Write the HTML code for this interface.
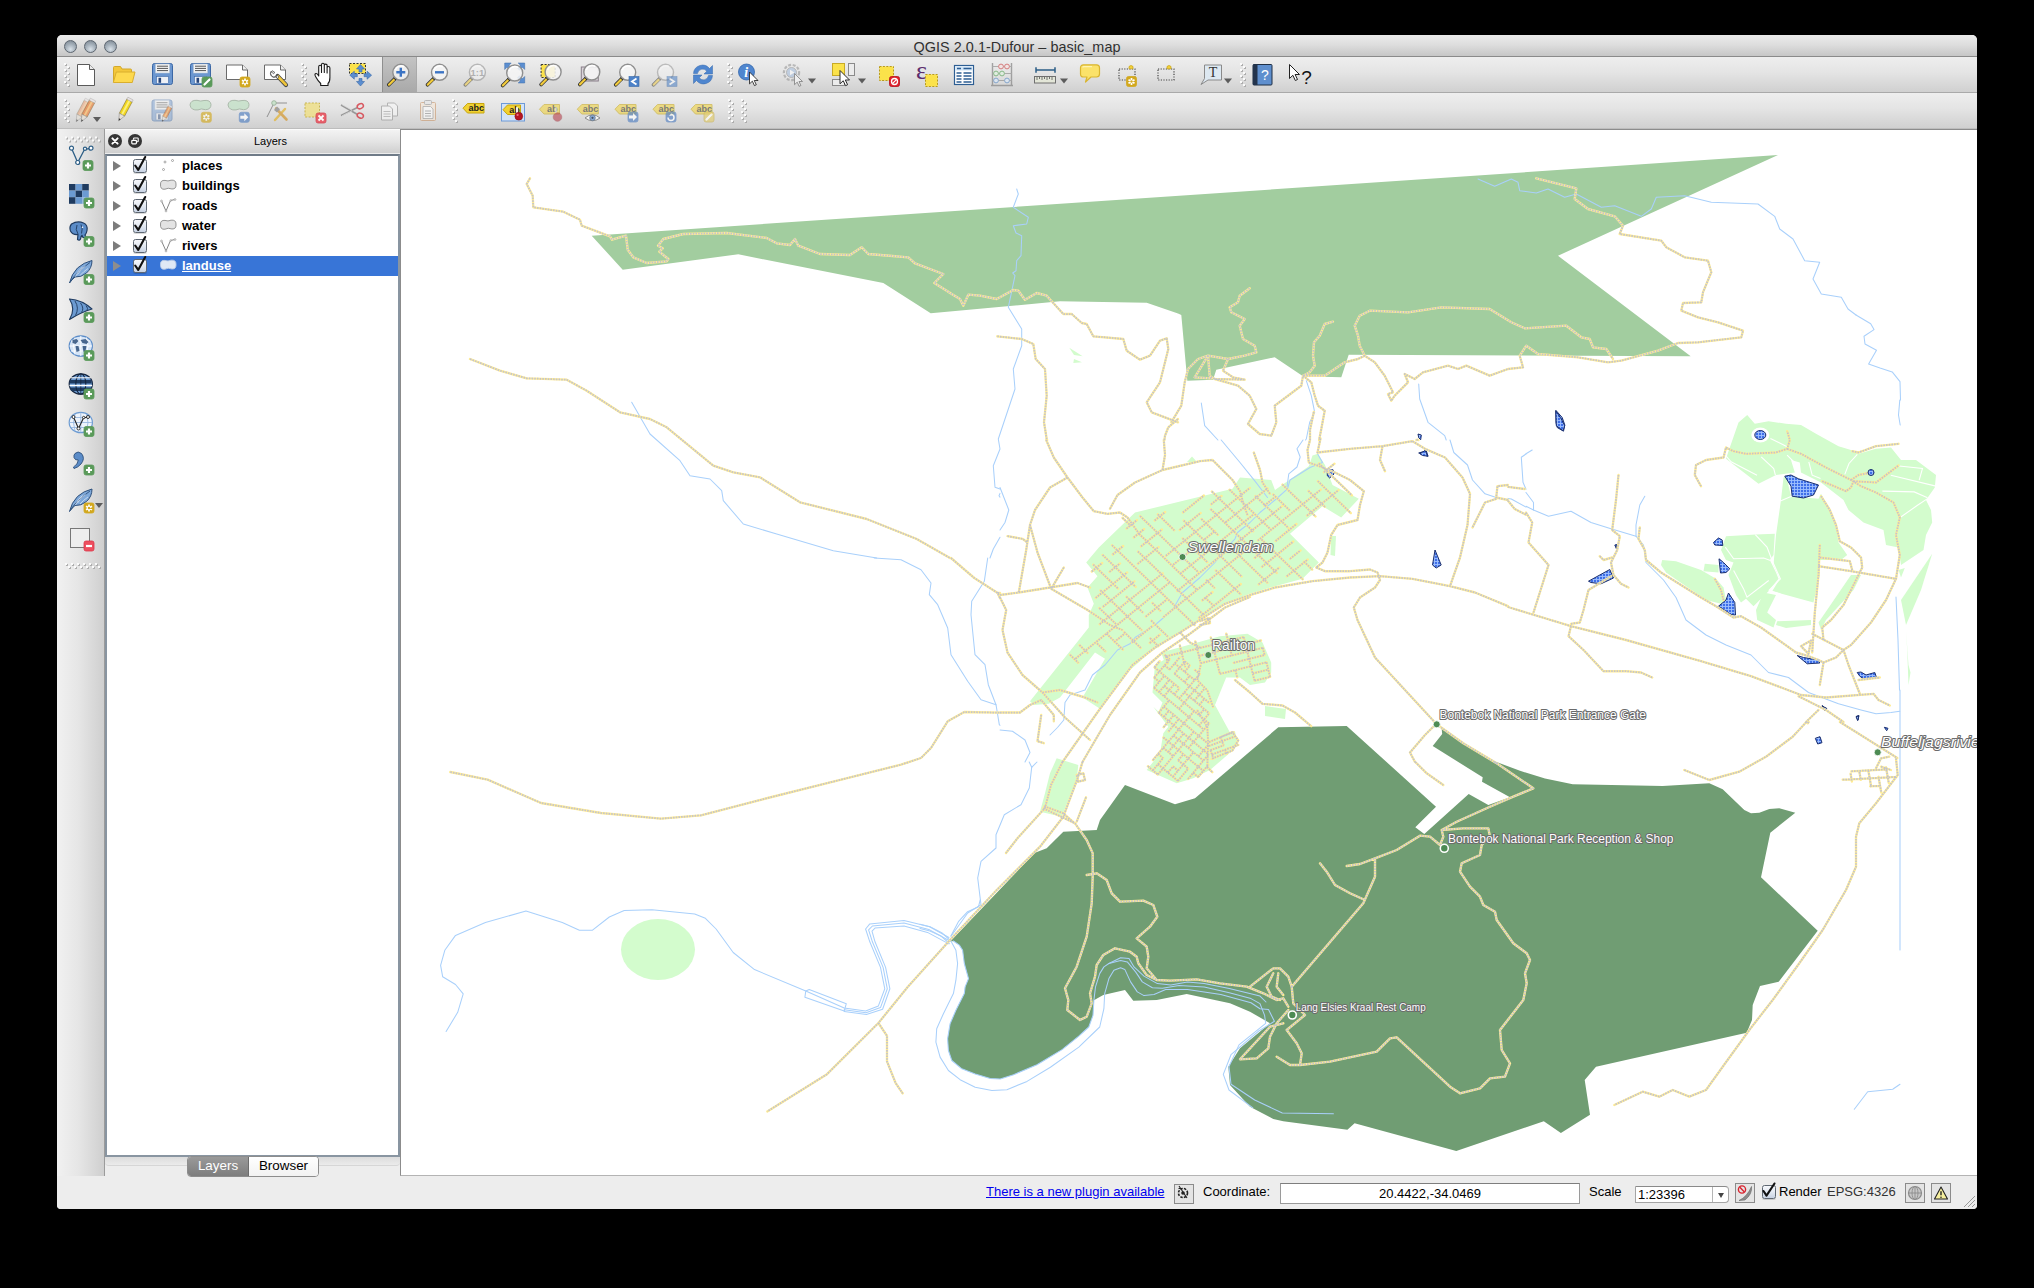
<!DOCTYPE html>
<html><head><meta charset="utf-8"><title>QGIS 2.0.1-Dufour - basic_map</title>
<style>
html,body{margin:0;padding:0;background:#000;}
body{width:2034px;height:1288px;position:relative;overflow:hidden;font-family:"Liberation Sans",sans-serif;color:#000;}
.abs{position:absolute;}
#win{position:absolute;left:57px;top:35px;width:1920px;height:1174px;background:#ededed;border-radius:5px 5px 4px 4px;overflow:hidden;}
#title{position:absolute;left:0;top:0;width:1920px;height:21px;background:linear-gradient(#ebebeb,#dedede 45%,#c6c6c6);border-bottom:1px solid #8a8a8a;}
#title .t{position:absolute;left:0;width:1920px;top:3.5px;text-align:center;font-size:14.4px;color:#303030;letter-spacing:0.05px;}
.tl{position:absolute;top:5px;width:11px;height:11px;border-radius:50%;background:radial-gradient(circle at 50% 75%,#d9e1e8 0%,#a9b4be 45%,#78838e 100%);border:1px solid #5d6670;}
.tb{position:absolute;left:0;width:1920px;height:35px;background:linear-gradient(#eeeeee,#e4e4e4 45%,#d0d0d0);border-bottom:1px solid #a9a9a9;}
#tb1{top:22px;}
#tb2{top:58px;border-bottom:1px solid #bdbdbd;}
#ltb{position:absolute;left:0;top:94px;width:47px;height:1047px;background:linear-gradient(90deg,#f1f1f1,#e6e6e6 45%,#cfcfcf);border-right:1px solid #9b9b9b;}
#lhead{position:absolute;left:48px;top:94px;width:295px;height:23px;border-top:1px solid #fbfbfb;background:linear-gradient(#f3f3f3,#e4e4e4 50%,#cfcfcf);}
#lhead .t{position:absolute;left:18px;width:295px;top:5px;text-align:center;font-size:11px;color:#000;}
#list{position:absolute;left:48px;top:119px;width:291px;height:999px;background:#fff;border:2px solid #8995a1;border-top-color:#6f7b88;}
.row{position:absolute;left:0;width:291px;height:20px;font-size:13px;font-weight:bold;}
.row .lbl{position:absolute;left:75px;top:2px;white-space:nowrap;}
.row .arr{position:absolute;left:6px;top:5px;width:0;height:0;border-left:8px solid #7c7c7c;border-top:5px solid transparent;border-bottom:5px solid transparent;}
.cb{position:absolute;left:25.5px;top:3px;width:12px;height:12px;border:1px solid #5f6873;border-radius:2.5px;background:linear-gradient(#f6f8fb,#e3e9f2 50%,#c7d2e3);box-shadow:0 1px 0 rgba(0,0,0,.15);}
.sel{background:#3875d7;color:#fff;}
#tabs{position:absolute;left:130px;top:1121px;height:19px;width:130px;border:1px solid #8d8d8d;border-radius:4px;overflow:hidden;background:#fff;font-size:13.4px;}
#tabs .a{position:absolute;left:0;top:0;width:60px;height:19px;background:linear-gradient(#9a9a9a,#7d7d7d);color:#fff;text-align:center;line-height:18px;border-right:1px solid #6d6d6d;}
#tabs .b{position:absolute;left:61px;top:0;width:69px;height:19px;background:linear-gradient(#ffffff,#f2f2f2);color:#000;text-align:center;line-height:18px;}
#tabline{position:absolute;left:48px;top:1122px;width:295px;height:8px;border-bottom:1px solid #d6d6d6;border-radius:0 0 4px 4px;background:linear-gradient(#dcdcdc,#ebebeb);}
#canvas{position:absolute;left:343px;top:94px;width:1577px;height:1047px;background:#fff;border-left:1px solid #8c8c8c;border-top:1px solid #8c8c8c;border-bottom:1px solid #b4b4b4;box-sizing:border-box;}
#status{position:absolute;left:0;top:1142px;width:1920px;height:32px;background:#ededed;font-size:13px;}
#status .s{position:absolute;top:7px;white-space:nowrap;}
.ibox{position:absolute;width:18px;height:18px;border:1px solid #8b8b8b;background:#e4e4e4;box-sizing:border-box;}
#mapsvg{position:absolute;left:0;top:0;}
.ico{position:absolute;}
</style></head><body>
<div id="win">
 <div id="title">
  <div class="tl" style="left:7px"></div><div class="tl" style="left:27px"></div><div class="tl" style="left:47px"></div>
  <div class="t">QGIS 2.0.1-Dufour – basic_map</div>
 </div>
 <div class="tb" id="tb1"></div>
 <div class="tb" id="tb2"></div>
 <div id="ltb"></div>
 <div id="lhead"><div class="t">Layers</div></div>
 <div id="list">
  <div class="row" style="top:0px"><div class="arr"></div><div class="cb"></div><div class="lbl">places</div></div>
  <div class="row" style="top:20px"><div class="arr"></div><div class="cb"></div><div class="lbl">buildings</div></div>
  <div class="row" style="top:40px"><div class="arr"></div><div class="cb"></div><div class="lbl">roads</div></div>
  <div class="row" style="top:60px"><div class="arr"></div><div class="cb"></div><div class="lbl">water</div></div>
  <div class="row" style="top:80px"><div class="arr"></div><div class="cb"></div><div class="lbl">rivers</div></div>
  <div class="row sel" style="top:100px"><div class="arr" style="border-left-color:#8d8d8d"></div><div class="cb"></div><div class="lbl" style="text-decoration:underline">landuse</div></div>
 </div>
 <div id="tabline"></div>
 <div id="tabs"><div class="a">Layers</div><div class="b">Browser</div></div>
 <div id="canvas"></div>
 <div id="status">
  <div class="s" style="left:929px;color:#0000ee;text-decoration:underline">There is a new plugin available</div>
  <div class="ibox" style="left:1117px;top:7px;width:20px;height:20px"></div>
  <div class="s" style="left:1146px">Coordinate:</div>
  <div class="abs" style="left:1223px;top:6px;width:298px;height:19px;border:1px solid #9a9a9a;border-top-color:#7e7e7e;background:#fff;text-align:center;line-height:19px;font-size:13px">20.4422,-34.0469</div>
  <div class="s" style="left:1532px">Scale</div>
  <div class="abs" style="left:1578px;top:9px;width:92px;height:15px;border:1px solid #a5a5a5;border-top-color:#8a8a8a;border-radius:0 4px 4px 0;background:#fff;font-size:13px;line-height:16px"><span style="position:absolute;left:2px;top:0">1:23396</span><span style="position:absolute;left:76px;top:0;width:1px;height:15px;background:#b5b5b5"></span><span style="position:absolute;left:82px;top:6px;width:0;height:0;border-top:5px solid #444;border-left:3px solid transparent;border-right:3px solid transparent"></span></div>
  <div class="ibox" style="left:1678px;top:6px;width:20px;height:20px"></div>
  <div class="cb" style="left:1705px;top:8px"></div>
  <div class="s" style="left:1722px">Render</div>
  <div class="s" style="left:1770px;color:#333">EPSG:4326</div>
  <div class="ibox" style="left:1848px;top:6px;width:20px;height:20px"></div>
  <div class="ibox" style="left:1874px;top:6px;width:20px;height:20px"></div>
 </div>
</div>
<svg id="mapsvg" width="2034" height="1288" viewBox="0 0 2034 1288">
<defs><clipPath id="mc"><rect x="401" y="130" width="1576" height="1046"/></clipPath><pattern id="wp" width="3" height="3" patternUnits="userSpaceOnUse"><rect width="3" height="3" fill="#3f6fe8"/><rect width="3" height="0.9" fill="#9fc0ff"/><rect width="0.9" height="3" fill="#9fc0ff"/></pattern></defs>
<g clip-path="url(#mc)">
<polygon fill="#a2cd9f" points="591.7,235.7 622.7,269.7 738.3,254.3 883.3,283.0 930.7,313.3 1060.0,301.3 1146.7,302.7 1178.0,313.5 1181.3,315.0 1187.3,380.7 1213.0,379.7 1216.3,369.7 1274.7,357.3 1303.0,376.3 1341.3,377.3 1348.7,354.7 1690.7,356.3 1558.0,255.7 1778.0,155.0"/>
<polygon fill="#709d73" points="1278.3,727.3 1346.7,726.0 1436.0,806.7 1415.3,827.3 1424.3,834.0 1468.7,794.0 1488.3,805.0 1510.0,797.3 1482.0,781.7 1482.7,777.3 1432.7,746.0 1442.2,733.9 1441.5,727.0 1459.0,741.0 1488.5,759.0 1520.0,770.8 1545.0,778.5 1572.7,784.3 1662.7,786.0 1709.3,783.3 1722.7,789.3 1744.3,810.0 1751.0,813.3 1759.3,812.7 1769.3,809.0 1779.3,808.3 1795.3,812.7 1770.3,832.7 1761.0,877.3 1817.7,930.7 1778.7,981.7 1760.0,986.0 1752.7,1005.0 1752.0,1020.0 1746.7,1032.7 1596.0,1066.7 1584.7,1080.0 1590.0,1114.8 1560.9,1133.1 1543.8,1121.2 1456.3,1151.1 1354.6,1123.3 1347.4,1129.7 1283.3,1121.2 1273.3,1119.0 1250.0,1106.7 1230.0,1085.0 1228.3,1066.7 1240.0,1048.3 1270.0,1023.3 1250.0,1011.7 1230.0,1003.3 1186.7,994.0 1156.7,1000.0 1133.3,1000.7 1125.0,990.0 1103.3,995.0 1093.9,1000.3 1093.0,1015.3 1088.8,1027.0 1078.8,1036.2 1062.1,1049.6 1037.0,1064.7 1013.6,1074.7 1000.2,1078.9 990.2,1078.5 975.2,1073.9 961.8,1068.8 951.8,1060.5 948.4,1050.5 947.6,1038.7 950.1,1023.7 955.9,1010.3 964.3,993.6 965.1,986.9 968.5,978.6 964.3,963.5 962.6,950.2 959.3,945.1 953.4,941.0 950.0,941.7 1035.0,852.7 1046.7,848.3 1063.3,831.7 1096.7,830.0 1100.0,820.0 1125.0,785.0 1175.0,804.3 1195.0,798.3"/>
<polygon fill="#d3fccd" points="1135.0,512.5 1232.5,488.8 1240.0,477.5 1271.2,480.0 1275.0,490.0 1308.8,466.2 1312.5,455.5 1318.0,453.8 1325.0,465.0 1332.5,485.0 1358.8,498.8 1341.2,517.5 1322.5,506.2 1290.0,533.8 1318.8,562.5 1302.5,578.8 1275.0,586.2 1250.0,593.8 1225.0,603.8 1207.5,615.0 1180.0,632.5 1150.0,652.5 1130.0,670.0 1100.0,708.8 1082.5,697.5 1105.0,658.8 1095.0,652.5 1060.0,697.5 1048.8,703.8 1033.8,705.0 1030.0,701.2 1088.8,627.5 1088.8,615.0 1093.8,603.8 1087.5,587.5 1097.5,576.2 1086.2,562.5 1098.8,547.5"/>
<polygon fill="#d3fccd" points="1187.0,462.0 1192.0,456.5 1197.5,462.5"/>
<polygon fill="#d3fccd" points="1161.2,652.5 1220.0,636.2 1247.5,633.8 1262.5,642.5 1271.2,662.5 1271.2,672.5 1265.0,682.5 1250.0,685.0 1240.0,677.5 1226.2,677.5 1215.0,705.0 1230.0,732.5 1235.0,731.2 1237.5,743.8 1233.2,750.0 1210.0,770.0 1193.3,778.3 1176.7,783.3 1146.7,770.0 1160.0,753.3 1163.3,733.3 1168.3,726.7 1153.3,706.7 1172.5,725.0 1158.8,711.2 1162.5,702.5 1152.5,692.5 1155.0,665.0 1163.8,660.0"/>
<polygon fill="#d3fccd" points="1265.0,706.0 1286.0,709.0 1285.0,719.0 1265.0,716.0"/>
<polygon fill="#d3fccd" points="1331.0,536.0 1336.0,536.0 1335.0,556.0 1330.5,555.0"/>
<polygon fill="#d3fccd" points="1056.7,758.3 1078.3,765.0 1076.7,780.0 1061.7,816.7 1040.0,811.7 1045.0,793.3 1050.0,773.3"/>
<polygon fill="#d3fccd" points="1729.8,447.5 1738.5,422.5 1747.2,415.0 1754.8,423.8 1768.5,421.2 1786.0,423.8 1801.0,425.0 1816.0,433.8 1838.5,446.2 1851.0,450.0 1858.5,453.8 1876.0,448.8 1891.0,447.5 1901.0,460.0 1916.0,460.0 1936.0,475.0 1934.8,487.5 1926.0,500.0 1931.0,510.0 1932.2,522.5 1926.0,535.0 1923.5,550.0 1901.0,565.0 1898.5,547.5 1886.0,545.0 1883.5,530.0 1863.5,522.5 1848.5,510.0 1843.5,500.0 1821.0,482.5 1801.0,472.5 1799.8,462.5 1791.0,460.0 1794.8,472.5 1776.0,475.0 1758.5,483.8 1726.0,458.8"/>
<polygon fill="#d3fccd" points="1783.5,477.5 1786.0,475.0 1791.0,496.2 1818.5,498.8 1821.0,493.8 1826.0,502.5 1836.0,525.0 1838.5,542.5 1847.2,555.0 1841.0,560.0 1819.8,560.0 1819.8,575.0 1813.5,602.5 1772.2,591.2 1779.8,578.8 1773.5,565.0 1776.0,535.0 1781.0,500.0"/>
<polygon fill="#d3fccd" points="1726.0,536.2 1756.0,534.5 1774.8,533.8 1773.5,555.0 1769.8,560.0 1776.0,572.5 1778.5,578.8 1768.5,591.2 1753.5,606.2 1746.0,598.8 1741.0,602.5 1736.0,595.0 1728.5,575.0 1733.5,562.5 1726.0,560.0 1721.0,550.0"/>
<polygon fill="#d3fccd" points="1662.2,560.0 1676.0,561.2 1701.0,570.0 1716.0,578.8 1723.5,587.5 1726.0,600.0 1721.0,603.8 1706.0,600.0 1666.0,572.5 1661.0,565.0"/>
<polygon fill="#d3fccd" points="1704.8,563.8 1718.5,565.0 1718.5,572.5 1703.5,571.2"/>
<polygon fill="#d3fccd" points="1763.5,592.5 1776.0,595.0 1767.2,612.5 1776.0,620.0 1773.5,627.5 1757.2,620.0 1756.0,610.0"/>
<polygon fill="#d3fccd" points="1777.2,621.2 1811.0,620.0 1811.0,625.0 1786.0,628.0 1776.0,625.0"/>
<polygon fill="#d3fccd" points="1818.5,622.5 1851.0,575.0 1861.0,575.0 1853.5,590.0 1826.0,620.0 1821.0,630.0"/>
<polygon fill="#d3fccd" points="1901.0,600.0 1932.2,553.8 1921.0,590.0 1906.0,625.0"/>
<polygon fill="#d3fccd" points="1906.0,630.0 1908.5,665.0 1910.5,672.5 1908.5,685.0 1907.2,650.0"/>
<polygon fill="#d3fccd" points="1898.5,570.0 1904.8,568.0 1901.0,577.5"/>
<polygon fill="#d3fccd" points="1069.3,347.7 1082.7,356.3 1074.0,355.0"/>
<polygon fill="#d3fccd" points="1074.0,359.0 1082.0,362.3 1073.3,363.0"/>
<ellipse cx="658" cy="949.5" rx="37" ry="30.5" fill="#d3fccd"/>
<ellipse cx="1760.3" cy="435" rx="9" ry="7.5" fill="#fff"/>
<g fill="none" stroke="#fff" stroke-width="1.1"><polyline points="1770.4,438.4 1787.1,446.8"/><polyline points="1761.2,456.8 1773.7,468.5 1775.4,475.2"/><polyline points="1787.1,455.2 1793.8,461.8 1795.5,470.2"/><polyline points="1725.3,455.2 1731.1,461.8 1757.0,475.2"/><polyline points="1857.3,454.3 1849.0,463.5 1844.8,474.4"/><polyline points="1808.8,461.8 1812.2,475.2 1820.5,478.6"/><polyline points="1899.1,466.0 1922.5,468.5 1919.2,480.2"/><polyline points="1890.8,475.2 1935.9,486.1"/><polyline points="1882.4,491.1 1914.2,491.9 1927.5,497.8"/><polyline points="1900.8,517.0 1917.5,505.3 1927.5,498.6"/><polyline points="1755.3,534.6 1767.0,547.1 1772.1,560.5 1780.4,578.9 1768.7,590.6"/><polyline points="1725.3,547.1 1733.6,558.8 1763.7,558.0 1770.4,560.5"/><polyline points="1733.6,570.5 1743.6,588.9 1747.0,597.2 1768.7,580.5"/><polyline points="1780.4,501.1 1792.1,496.1"/><polyline points="1769.6,590.6 1780.4,593.9"/></g>
<g fill="none" stroke="#a9d0fb" stroke-width="1.05" stroke-linejoin="round" stroke-linecap="round">
<polyline points="631.7,402.3 650.0,434.0 680.0,460.7 690.0,475.7 710.0,479.0 721.7,490.7 723.3,500.7 743.3,524.0 776.7,534.0 833.3,550.7 876.7,558.0"/>
<polyline points="1016.7,189.0 1018.3,194.0 1013.3,207.3 1028.3,217.3 1026.7,224.0 1013.3,225.7 1016.0,233.0 1021.7,235.7 1021.0,255.7 1016.7,260.7 1016.0,270.7 1012.7,273.0 1015.0,275.7 1008.3,307.3 1021.7,329.0 1021.7,345.7 1013.3,369.0 1015.0,389.0 998.3,439.0 1000.0,449.0 993.3,465.7 995.0,487.3 1000.0,489.1"/>
<polyline points="1000.0,493.4 999.0,495.7 1000.0,497.1"/>
<polyline points="1000.0,537.3 993.3,549.0 990.0,558.0"/>
<polyline points="1478.0,179.0 1494.7,186.3 1511.3,179.0 1518.0,182.3 1519.7,190.7 1536.3,193.0 1548.0,189.0 1564.7,197.3 1576.3,194.0 1601.3,207.3 1614.7,205.7 1641.3,216.3 1651.3,209.0 1656.3,197.3 1684.7,195.7 1711.3,202.3 1758.0,204.0 1774.7,216.3 1779.7,229.0 1793.0,239.0 1804.7,260.7 1819.7,262.3 1813.0,279.0 1821.3,294.0 1841.3,297.3 1848.0,309.0 1856.0,315.0"/>
<polyline points="1306.3,380.7 1311.3,395.7 1314.7,412.3 1309.7,422.3 1306.3,439.0 1305.5,440.0"/>
<polyline points="1201.3,403.0 1204.7,425.7 1217.9,440.0"/>
<polyline points="1418.7,384.0 1419.7,399.0 1428.0,422.3 1444.7,435.7 1446.2,440.0"/>
<polyline points="1508.0,498.4 1511.3,499.0 1526.0,507.1"/>
<polyline points="1526.0,454.0 1521.3,457.3 1523.0,482.3 1526.0,489.2"/>
<polyline points="1317.5,453.8 1322.5,462.5 1310.0,467.5 1290.0,480.0 1287.5,488.8 1275.0,500.0 1260.0,512.5 1250.0,522.5 1237.5,532.5 1235.0,538.8 1222.5,552.5 1215.0,562.5 1200.0,577.5 1182.5,592.5 1172.5,610.0 1155.0,625.0 1135.0,637.5 1130.0,643.8 1117.5,650.0 1105.0,665.0 1092.5,675.0 1085.0,690.0 1070.0,695.0 1065.0,702.5 1063.8,720.0 1057.5,727.5 1050.0,735.0"/>
<polyline points="1221.2,440.0 1240.0,462.5 1255.0,481.2 1267.5,497.5"/>
<polyline points="1303.0,440.0 1297.0,448.8 1300.2,457.0 1297.0,467.0 1288.8,473.8 1287.0,487.0"/>
<polyline points="1000.0,487.5 1008.8,510.0 1005.0,522.5 1000.0,530.0"/>
<polyline points="1450.0,440.0 1453.8,452.5 1467.5,465.0 1472.5,480.0 1485.0,493.8 1496.2,497.5"/>
<polyline points="1000.0,730.0 1012.5,731.2 1025.0,740.0 1030.0,752.5 1025.0,762.0"/>
<polyline points="1526.0,506.2 1533.5,510.0 1548.5,516.2 1571.0,511.2 1591.0,522.5 1611.0,528.8 1636.0,536.2 1643.5,545.0 1646.0,562.5 1663.5,580.0 1676.0,597.5 1686.0,620.0 1706.0,635.0 1726.0,645.0 1751.0,655.0 1768.5,672.5 1788.5,677.5 1808.5,692.5 1838.5,703.8 1861.0,710.0 1876.0,713.8 1891.0,712.5 1899.8,711.2"/>
<polyline points="1644.8,496.2 1639.8,505.0 1636.0,525.0 1636.0,536.2"/>
<polyline points="1532.2,450.0 1526.0,453.8"/>
<polyline points="1526.0,492.5 1533.5,502.5 1533.5,510.0"/>
<polyline points="1899.8,400.0 1898.5,415.0 1900.2,425.0"/>
<polyline points="1900.0,690.0 1900.0,950.0"/>
<polyline points="1854.3,1109.3 1867.7,1091.7 1892.7,1089.3 1900.0,1084.3"/>
<polyline points="1896.0,597.0 1898.0,640.0 1899.5,690.0"/>
<polyline points="874.3,558.0 901.0,559.7 921.0,569.7 931.0,583.0 929.3,594.7 937.7,604.7 947.7,628.0 951.0,654.7 967.7,681.3 981.0,699.7 996.0,704.7 999.3,724.7 1000.0,725.3"/>
<polyline points="1029.2,762.0 1031.7,767.3 1029.3,788.0 1021.0,804.7 1004.3,814.7 996.0,834.7 996.0,848.0 981.0,861.3 977.7,878.0 981.0,904.7 967.7,913.0 951.0,936.3"/>
<polyline points="987.7,558.0 984.3,581.3 971.7,601.3 971.0,614.7 975.0,654.7 985.0,664.7 988.3,684.7 996.0,704.7"/>
<polyline points="1037.0,762.0 1031.7,767.3"/>
<polyline points="446.1,1031.5 457.7,1012.3 463.2,993.9 455.5,984.5 442.7,976.8 440.6,965.3 444.8,950.3 455.5,935.4 485.4,922.6 526.0,911.0 562.3,922.6 579.4,930.3 592.2,930.3 609.3,917.0 624.2,910.6 652.0,909.8 694.7,914.0 705.4,918.3 716.1,929.0 733.2,952.5 754.5,969.6 805.8,990.9 844.2,1008.0 865.6,1011.0 878.4,1005.9 884.8,988.8 880.5,967.4 869.8,941.8 865.6,929.0 869.8,923.9 904.0,920.4 929.6,926.8 948.9,937.5"/>
<polyline points="844.2,1011.4 866.4,1014.4 882.6,1009.3 889.9,988.8 885.6,967.4 875.0,941.8 872.0,931.1 875.0,928.1 904.0,926.0 927.5,932.4 948.9,943.9"/>
<polyline points="844.2,1009.7 866.0,1012.7 880.5,1007.6 887.3,988.8 883.1,967.4 872.4,941.8 868.6,929.8 872.4,926.0 904.0,923.0 928.8,929.4 948.9,940.5"/>
<polyline points="805.8,990.9 809.2,989.6 846.3,1003.7 844.2,1011.0 804.9,997.3 805.8,990.9"/>
<polyline points="1856.0,315.0 1870.7,323.8 1874.0,329.6 1864.0,336.3 1865.0,344.0 1876.5,350.3 1868.6,364.0 1880.0,368.0 1892.2,371.9 1900.0,381.7 1900.5,400.0"/>
<polyline points="953.4,941.0 959.3,945.1 962.6,950.2 964.3,963.5 968.5,978.6 965.1,986.9 964.3,993.6 955.9,1010.3 950.1,1023.7 947.6,1038.7 948.4,1050.5 951.8,1060.5 961.8,1068.8 975.2,1073.9 990.2,1078.5 1000.2,1078.9 1013.6,1074.7 1037.0,1064.7 1062.1,1049.6 1078.8,1036.2 1088.8,1027.0 1093.0,1015.3 1093.9,1000.3 1095.5,986.9 1099.7,973.6 1103.9,966.9 1108.9,963.5 1120.6,960.5 1127.3,961.9 1135.6,971.9 1142.3,981.9 1152.4,987.8 1162.4,988.3 1179.1,985.6 1204.2,986.9 1229.3,992.8 1251.0,998.6 1260.0,1003.6 1264.6,1015.4 1265.7,1023.3 1239.0,1044.9 1229.0,1066.5 1231.0,1084.2 1254.7,1100.0 1282.3,1113.0 1333.4,1113.7"/>
<polyline points="920.0,924.2 930.0,926.7 941.7,932.6 950.9,941.0 955.9,950.2 957.6,963.5 955.9,980.2 953.4,993.6 943.4,1013.7 936.7,1028.7 935.9,1042.1 940.1,1057.1 948.4,1070.5 960.1,1079.7 975.2,1087.2 991.9,1090.6 1006.9,1089.7 1027.0,1081.4 1050.4,1067.2 1078.8,1047.1 1099.7,1027.0 1103.9,1008.7 1104.7,993.6 1108.9,978.6 1113.9,970.2 1120.6,967.7 1124.8,969.4 1130.6,981.9 1137.3,991.9 1144.0,995.6 1154.0,994.5 1165.7,989.4 1187.5,989.4 1220.9,994.5 1251.0,1002.8 1260.0,1008.7 1268.5,1009.5 1274.4,1021.3 1258.7,1031.0 1231.0,1054.7 1223.3,1074.4 1229.0,1090.0 1252.8,1107.8"/>
<polyline points="920.0,928.4 930.0,930.9 940.9,935.9 949.3,943.5"/>
<polyline points="1108.9,963.5 1120.6,957.7 1129.0,958.5 1134.0,966.9 1144.0,976.1 1157.4,983.6 1170.8,984.9 1187.5,981.9 1204.2,983.6 1229.3,988.6 1260.0,996.1 1266.0,1002.0"/>
<polyline points="980.2,900.0 978.5,906.7 967.6,911.7 958.4,921.7 950.9,935.9"/>
</g>
<g fill="url(#wp)" stroke="#1b2f6e" stroke-width="1" stroke-linejoin="round">
<polygon points="1556.0,410.5 1562.2,417.5 1564.8,425.0 1563.5,431.2 1557.2,427.5 1556.0,422.5"/>
<polygon points="1784.8,476.2 1791.0,475.0 1798.5,478.8 1818.5,485.0 1813.5,495.0 1803.5,498.0 1792.2,496.2 1791.0,486.2"/>
<polygon points="1713.5,542.5 1718.5,538.0 1722.2,540.0 1722.8,545.5 1714.8,545.0"/>
<polygon points="1719.0,558.8 1723.5,562.5 1729.8,568.8 1726.0,572.5 1720.5,573.0"/>
<polygon points="1718.5,606.2 1726.0,600.0 1728.5,593.0 1734.8,602.5 1735.5,615.0 1731.0,614.5"/>
<polygon points="1588.5,581.2 1609.8,569.5 1613.5,578.0 1601.0,583.8 1591.0,582.5"/>
<polygon points="1797.2,655.5 1803.5,657.5 1818.5,660.0 1819.8,663.0 1807.2,663.8"/>
<polygon points="1857.2,672.5 1861.0,672.0 1866.0,675.0 1874.8,672.5 1876.5,677.5 1863.5,678.8 1859.8,676.2"/>
<polygon points="1614.8,545.0 1616.8,544.5 1616.5,549.0"/>
<polygon points="1822.2,705.5 1826.0,708.8 1824.8,710.5"/>
<polygon points="1856.5,716.2 1859.0,715.5 1858.0,720.0"/>
<polygon points="1555.7,410.7 1561.3,419.0 1564.7,425.7 1563.0,430.7 1556.3,425.7"/>
<polygon points="1418.0,434.0 1421.3,435.0 1420.7,439.7 1418.7,437.7"/>
<polygon points="1418.7,453.0 1426.3,450.7 1428.0,456.3"/>
<polygon points="1327.3,470.7 1333.0,469.7 1334.0,474.0 1329.7,478.0 1327.3,475.7"/>
<polygon points="1420.0,453.8 1425.0,450.5 1428.0,456.2 1422.5,455.5"/>
<polygon points="1432.5,565.0 1435.0,550.0 1441.2,565.0 1436.2,568.0"/>
<polygon points="1815.3,738.3 1820.0,736.7 1822.0,742.7 1817.7,744.0"/>
<polygon points="1822.0,706.0 1826.7,708.3 1826.0,710.7"/>
<polygon points="1856.0,716.7 1858.7,716.0 1857.7,720.7"/>
<polygon points="1884.3,727.3 1888.0,728.3 1886.7,730.7"/>
</g>
<path d="M530.0 178.3 L526.7 184.0 L532.7 195.7 L533.3 207.3 L563.3 211.7 L580.0 219.7 L581.7 225.7 L610.0 236.3 L612.0 239.7 L626.0 235.7 L627.7 249.7 L633.3 257.3 L646.7 263.0 L666.7 261.3 L668.3 259.0 L659.3 251.7 L662.7 248.3 L658.0 245.7 L663.3 239.0 L683.3 234.0 L726.7 233.0 L766.7 238.0 L776.7 243.3 L790.0 245.0 L795.0 239.0 L798.3 245.7 L820.0 254.0 L850.0 255.0 L861.7 247.3 L868.3 254.0 L908.3 257.3 L915.0 263.3 L943.3 274.0 L934.3 283.0 L946.7 290.7 L951.7 294.0 L960.0 299.0 L963.3 305.7 L968.3 294.7 L980.0 295.7 L996.7 299.0 L1013.3 290.0 L1018.3 290.7 L1025.0 299.7 L1036.7 293.0 L1046.7 295.7 L1063.3 314.0 L1071.7 314.0 L1081.7 323.0 L1086.7 324.0 L1093.3 336.3 L1123.3 339.0 L1126.7 350.7 L1140.0 359.7 L1150.0 355.7 L1160.0 340.7 L1166.7 338.3 L1168.3 349.0 L1160.0 382.3 L1146.7 402.3 L1151.7 412.3 L1178.0 422.3 M470.0 359.0 L500.0 370.7 L526.7 378.3 L566.7 379.7 L586.7 390.7 L620.0 412.3 L650.0 419.0 L666.7 427.3 L713.3 465.7 L733.3 472.3 L760.0 477.3 L800.0 502.3 L866.7 519.0 L916.7 539.0 L950.0 558.0 M997.3 336.3 L1021.7 339.0 L1033.3 344.0 L1035.7 359.0 L1045.0 369.0 L1046.7 395.7 L1044.0 422.3 L1046.7 439.0 L1047.1 440.0 M1164.4 440.0 L1165.0 435.7 L1168.3 427.3 L1178.0 419.0 M1536.3 178.3 L1576.3 188.3 L1574.7 199.0 L1588.0 209.0 L1614.7 216.3 L1623.0 225.7 L1619.7 234.0 L1661.3 240.7 L1666.3 247.3 L1684.7 257.3 L1708.0 260.7 L1711.3 272.3 L1703.0 292.3 L1701.3 302.3 L1683.0 303.0 L1681.3 310.7 L1698.0 317.3 L1718.0 322.3 L1743.0 330.7 L1741.3 337.3 L1698.0 342.3 L1678.0 343.0 L1658.0 350.7 L1621.3 360.7 L1608.0 362.3 L1578.0 357.3 L1538.0 354.0 L1526.3 345.7 L1519.7 355.7 L1523.0 367.3 L1508.0 369.0 L1489.7 375.7 L1466.3 365.7 L1458.0 369.0 L1448.0 365.7 L1423.0 372.3 L1414.7 379.0 L1404.7 374.0 L1408.0 382.3 L1394.7 395.7 L1391.3 400.7 M1391.3 400.7 L1388.0 394.0 L1393.0 392.3 L1384.7 375.7 L1374.7 362.3 L1364.7 355.7 L1359.7 345.7 L1358.0 335.7 L1354.7 325.7 L1359.7 315.7 L1369.7 310.7 L1408.0 312.3 L1441.3 307.3 L1489.7 309.0 L1511.3 322.3 L1524.7 328.3 L1566.3 325.7 L1581.3 337.3 L1589.7 339.0 L1593.0 347.3 L1606.3 349.0 L1613.0 359.0 M1364.7 355.7 L1358.0 359.0 L1344.7 362.3 L1334.7 369.0 L1324.7 375.7 L1304.7 375.7 M1249.7 288.3 L1239.7 295.7 L1238.0 302.3 L1229.7 307.3 L1231.3 312.3 L1244.7 319.0 L1239.7 325.7 L1243.0 339.0 L1254.7 345.7 L1256.3 352.3 L1244.7 355.7 L1228.0 359.0 L1208.0 355.7 L1198.0 359.0 L1188.0 369.0 L1184.7 382.3 L1181.3 405.7 L1171.3 422.3 M1208.0 355.7 L1209.7 375.7 L1214.7 379.0 L1244.7 379.7 M1208.0 355.7 L1194.7 377.3 L1211.3 378.3 M1228.0 359.0 L1223.0 370.7 L1233.0 377.3 L1244.7 379.7 M1214.7 379.0 L1238.0 385.7 L1249.7 395.7 L1256.3 409.0 L1248.0 424.0 L1259.7 434.0 L1271.3 435.7 L1276.3 422.3 L1274.7 405.7 L1288.0 395.7 L1301.3 385.7 L1303.0 375.7 M1333.0 321.7 L1324.7 324.0 L1319.7 335.7 L1314.0 342.3 L1313.0 355.7 L1314.7 365.7 L1309.7 372.3 L1303.0 375.7 M1303.0 375.7 L1311.3 382.3 L1314.7 395.7 L1318.0 405.7 L1324.7 410.7 L1321.3 429.0 L1319.1 440.0 M1416.4 440.0 L1418.0 439.7 L1418.4 440.0 M1508.0 486.9 L1524.7 489.0 M1508.0 500.7 L1508.0 500.7 L1514.7 509.0 L1526.0 514.7 M1075.0 823.3 L1086.7 840.0 L1092.7 853.3 L1092.7 876.7 L1091.7 903.3 L1086.7 936.7 L1076.7 966.7 L1065.0 988.3 L1068.3 1000.0 L1067.3 1010.0 L1080.0 1020.0 L1086.7 1016.7 L1091.7 1003.3 L1090.0 993.3 L1095.0 976.7 L1096.7 965.0 L1103.3 955.0 L1115.0 948.3 L1130.0 951.7 L1136.7 956.7 L1138.3 963.3 L1146.7 975.0 L1156.7 980.0 L1170.0 980.7 L1196.7 979.3 L1220.0 983.3 L1246.7 986.7 L1263.3 993.3 L1276.7 1000.0 L1283.3 998.3 L1288.3 1006.7 M1086.7 875.0 L1096.7 873.3 L1106.7 880.0 L1111.7 893.3 L1120.0 901.7 L1143.3 900.7 L1153.3 905.0 L1157.3 916.7 L1150.0 926.7 L1136.7 938.3 L1146.7 946.7 L1148.3 956.7 L1146.7 968.3 L1156.7 980.0 M1291.7 986.7 L1363.3 903.3 L1375.0 876.7 L1375.0 858.3 M1346.7 866.0 L1360.0 864.0 L1375.0 858.3 L1396.7 850.0 L1420.0 835.7 L1430.0 836.7 L1440.0 845.0 M1320.0 863.3 L1326.7 871.7 L1335.0 885.0 L1350.0 893.3 L1363.3 899.3 M1440.0 845.0 L1443.3 836.7 L1441.7 830.0 L1456.7 821.7 L1490.0 806.7 L1513.3 796.7 L1533.3 788.3 L1496.7 763.3 L1494.4 762.0 M1415.3 762.0 L1426.7 773.3 L1443.3 785.0 M1441.7 830.0 L1463.3 828.3 L1488.3 828.3 L1490.0 836.7 L1481.7 845.0 L1480.0 855.0 L1461.7 863.3 L1460.0 871.7 L1470.0 886.7 L1480.0 896.7 L1483.3 905.0 L1495.0 911.7 L1496.7 920.0 L1513.3 943.3 L1526.7 953.3 L1530.0 960.0 L1525.0 973.3 L1526.7 983.3 L1523.3 1000.0 L1500.0 1030.0 L1501.7 1050.0 L1510.0 1063.3 L1505.0 1076.7 L1490.0 1078.3 L1480.0 1088.3 L1460.0 1093.3 L1450.0 1086.7 L1396.7 1037.3 L1390.0 1038.3 L1376.7 1051.7 L1330.0 1061.7 L1300.0 1065.0 L1290.0 1065.0 L1276.7 1056.7 M1291.7 986.7 L1288.3 976.7 L1280.0 968.3 L1273.3 968.3 L1250.0 986.7 M1273.3 973.3 L1266.7 986.7 L1271.7 996.7 L1280.0 1000.0 M1278.3 973.3 L1276.7 986.7 L1283.3 995.0 M1291.7 986.7 L1293.3 1003.3 L1305.0 1015.0 L1286.7 1030.0 L1296.7 1043.3 L1301.7 1053.3 L1300.0 1065.0 M1288.3 1010.0 L1276.7 1023.3 L1270.0 1036.7 L1268.3 1048.3 L1256.7 1058.3 L1240.0 1059.3 L1270.0 1026.7 L1283.3 1023.3 M1083.3 773.3 L1085.0 780.0 L1078.3 781.7 L1076.7 775.0 L1083.3 773.3 M1086.0 797.3 L1076.7 821.7 M1043.3 808.3 L1075.0 823.3 M1046.2 440.0 L1053.8 457.5 L1067.5 477.5 L1082.5 497.5 L1093.8 511.2 L1107.5 513.8 L1120.0 512.5 L1127.5 517.5 L1140.0 535.0 M1110.0 508.8 L1117.5 495.0 L1135.0 482.5 L1162.5 470.0 L1200.0 461.2 L1212.5 460.0 L1225.0 472.5 L1232.5 480.0 L1240.0 491.2 L1243.8 505.0 L1247.5 515.0 M1162.5 470.0 L1165.0 455.0 L1163.8 440.0 M1067.5 477.5 L1050.0 487.5 L1035.0 510.0 L1030.0 525.0 L1026.2 550.0 L1018.8 592.5 M1000.0 595.0 L1018.8 592.5 L1050.0 587.5 L1077.5 583.0 L1090.0 587.5 M1007.5 536.2 L1022.5 538.8 L1027.5 542.5 M1063.8 567.5 L1051.2 588.8 M1030.0 525.0 L1037.5 552.5 L1051.2 588.8 L1087.5 610.0 L1110.0 625.0 L1122.5 630.0 M1000.0 597.5 L1006.2 610.0 L1002.5 630.0 L1007.5 652.5 L1022.5 675.0 L1042.5 692.5 L1065.0 717.5 L1090.0 740.0 M1000.0 712.5 L1020.0 712.5 L1030.0 705.0 L1041.2 700.0 L1053.8 715.0 L1053.8 721.2 M1042.5 692.5 L1060.0 690.0 L1085.0 697.5 L1097.5 702.5 M1041.2 715.0 L1037.5 741.2 L1043.8 743.2 M1253.8 452.5 L1260.0 470.0 L1262.5 482.5 L1270.0 493.8 M1313.8 412.0 L1310.0 430.0 L1310.0 440.0 L1307.5 450.0 L1308.8 462.5 L1322.5 467.5 L1335.0 472.5 L1350.0 480.0 L1363.8 491.2 L1360.0 505.0 L1357.5 520.0 L1337.5 525.0 L1331.2 535.0 L1327.5 552.5 L1322.5 562.5 L1316.2 567.5 M1320.5 438.5 L1317.5 452.5 L1350.0 448.8 L1382.5 446.2 L1412.5 441.2 M1382.5 446.2 L1380.0 460.0 L1385.0 471.2 M1412.5 441.2 L1425.0 448.8 L1445.0 457.5 L1462.5 477.5 L1470.0 493.8 L1467.5 525.0 L1460.0 557.5 L1450.0 586.2 M1508.0 485.0 L1497.5 486.2 L1496.2 497.5 L1508.0 500.0 M1496.2 498.8 L1485.0 502.5 L1472.5 527.5 M1062.5 762.0 L1100.0 708.8 L1132.5 665.0 L1155.0 647.5 L1180.0 632.5 L1207.5 615.0 L1225.0 603.8 L1250.0 595.0 L1275.0 587.5 L1312.5 581.2 L1350.0 577.5 L1380.0 576.2 L1412.5 578.8 L1450.0 586.2 L1475.0 592.5 L1508.0 606.2 M1082.5 762.0 L1110.0 715.0 L1140.0 672.5 L1162.5 652.5 L1190.0 633.8 L1225.0 607.5 L1250.0 597.0 M1200.0 625.0 L1210.0 623.0 L1209.0 618.0 L1200.0 621.2 M1316.2 567.5 L1325.0 571.2 L1350.0 571.2 L1370.0 569.5 L1377.5 572.5 L1380.0 580.0 L1375.0 587.5 L1360.0 597.5 L1353.8 607.5 L1357.5 620.0 L1375.0 657.5 L1405.0 690.0 L1436.2 723.8 M1436.2 723.8 L1425.0 735.0 L1410.0 752.5 L1415.0 762.0 M1235.0 680.0 L1250.0 692.5 L1262.5 703.8 L1282.5 705.5 L1295.0 712.5 L1311.2 726.2 M1180.0 632.5 L1190.0 642.5 L1200.0 647.5 M1126.5 528.6 L1137.0 520.1 M1091.8 571.5 L1102.2 563.0 M1112.7 554.5 L1123.2 546.0 M1133.7 537.5 L1144.2 529.0 M1154.7 520.5 L1165.2 512.0 M1109.5 571.9 L1120.0 563.4 M1141.0 546.4 L1151.5 538.0 L1161.9 529.5 M1182.9 512.5 L1193.4 504.0 L1203.9 495.5 M1095.7 597.9 L1106.2 589.4 L1116.7 580.9 L1127.2 572.4 M1137.7 563.9 L1148.2 555.4 L1158.7 546.9 M1179.7 529.9 L1190.2 521.4 L1200.7 512.9 M1211.1 504.4 L1221.6 495.9 M1103.0 606.8 L1113.5 598.3 L1124.0 589.8 L1134.5 581.3 M1165.9 555.8 L1176.4 547.3 L1186.9 538.8 L1197.4 530.3 L1207.9 521.8 L1218.4 513.3 L1228.9 504.9 L1239.4 496.4 L1249.9 487.9 M1099.7 624.2 L1110.2 615.7 L1120.7 607.2 L1131.2 598.7 L1141.7 590.3 L1152.2 581.8 L1162.7 573.3 M1173.2 564.8 L1183.7 556.3 L1194.1 547.8 M1204.6 539.3 L1215.1 530.8 M1225.6 522.3 L1236.1 513.8 L1246.6 505.3 L1257.1 496.8 L1267.6 488.3 M1075.5 658.7 L1086.0 650.2 L1096.5 641.7 L1107.0 633.2 L1117.5 624.7 L1127.9 616.2 L1138.4 607.7 L1148.9 599.2 L1159.4 590.7 L1169.9 582.2 M1180.4 573.7 L1190.9 565.2 L1201.4 556.7 L1211.9 548.2 L1222.4 539.7 L1232.9 531.2 L1243.3 522.7 L1253.8 514.2 M1264.3 505.7 L1274.8 497.2 M1114.2 642.1 L1124.7 633.6 M1145.7 616.6 L1156.2 608.1 L1166.7 599.6 M1177.1 591.1 L1187.6 582.6 L1198.1 574.1 L1208.6 565.6 L1219.1 557.1 L1229.6 548.7 L1240.1 540.2 L1250.6 531.7 L1261.1 523.2 L1271.6 514.7 L1282.1 506.2 M1324.0 472.2 L1334.5 463.7 M1131.9 642.5 L1142.4 634.1 L1152.9 625.6 M1163.4 617.1 L1173.9 608.6 L1184.4 600.1 L1194.9 591.6 L1205.4 583.1 L1215.9 574.6 L1226.3 566.1 L1236.8 557.6 L1247.3 549.1 M1257.8 540.6 L1268.3 532.1 L1278.8 523.6 L1289.3 515.1 L1299.8 506.6 L1310.3 498.1 L1320.8 489.6 M1149.7 643.0 L1160.1 634.5 M1202.1 600.5 L1212.6 592.0 M1254.6 558.0 L1265.1 549.5 M1275.6 541.0 L1286.0 532.5 L1296.5 524.0 M1307.0 515.6 L1317.5 507.1 L1328.0 498.6 L1338.5 490.1 M1198.9 617.9 L1209.3 609.4 L1219.8 601.0 L1230.3 592.5 L1240.8 584.0 M1261.8 567.0 L1272.3 558.5 L1282.8 550.0 L1293.3 541.5 M1258.6 584.4 L1269.0 575.9 L1279.5 567.4 M1290.0 558.9 L1300.5 550.4 M1286.8 576.3 L1297.3 567.9 L1307.8 559.4 M1318.9 463.4 L1327.1 471.4 L1335.4 479.4 L1343.7 487.4 L1351.9 495.4 M1317.8 481.1 L1326.0 489.1 L1334.3 497.1 L1342.6 505.1 L1350.8 513.1 M1308.4 490.8 L1316.6 498.8 L1324.9 506.8 M1282.5 484.6 L1290.7 492.6 L1299.0 500.6 L1307.3 508.5 L1315.5 516.5 M1273.1 494.3 L1281.3 502.3 L1289.6 510.3 M1255.4 496.0 L1263.7 504.0 L1272.0 512.0 L1280.2 520.0 L1288.5 528.0 M1229.5 489.7 L1237.8 497.7 L1246.0 505.7 L1254.3 513.7 L1262.6 521.7 L1270.9 529.7 M1304.0 561.6 L1312.2 569.6 M1211.9 491.5 L1220.1 499.5 L1228.4 507.4 L1236.7 515.4 L1244.9 523.4 L1253.2 531.4 M1261.5 539.4 L1269.8 547.4 L1278.0 555.4 L1286.3 563.4 L1294.6 571.4 L1302.8 579.3 M1210.7 509.2 L1219.0 517.2 L1227.3 525.1 L1235.6 533.1 L1243.8 541.1 L1252.1 549.1 L1260.4 557.1 L1268.7 565.1 L1276.9 573.1 M1201.4 518.9 L1209.6 526.9 L1217.9 534.9 M1226.2 542.8 L1234.5 550.8 L1242.7 558.8 L1251.0 566.8 L1259.3 574.8 L1267.5 582.8 M1183.7 520.6 L1192.0 528.6 L1200.3 536.6 L1208.5 544.6 L1216.8 552.6 L1225.1 560.5 L1233.4 568.5 L1241.6 576.5 M1157.8 514.3 L1166.1 522.3 L1174.3 530.3 M1182.6 538.3 L1190.9 546.3 L1199.2 554.3 L1207.4 562.3 M1215.7 570.3 L1224.0 578.2 L1232.2 586.2 L1240.5 594.2 M1140.1 516.1 L1148.4 524.0 L1156.7 532.0 L1165.0 540.0 L1173.2 548.0 L1181.5 556.0 L1189.8 564.0 L1198.1 572.0 M1206.3 580.0 L1214.6 588.0 M1122.5 517.8 L1130.8 525.8 M1139.0 533.8 L1147.3 541.7 L1155.6 549.7 L1163.9 557.7 L1172.1 565.7 L1180.4 573.7 L1188.7 581.7 L1196.9 589.7 M1205.2 597.7 L1213.5 605.7 M1137.9 551.5 L1146.2 559.4 L1154.5 567.4 L1162.7 575.4 L1171.0 583.4 L1179.3 591.4 L1187.6 599.4 L1195.8 607.4 L1204.1 615.4 M1112.0 545.2 L1120.3 553.2 L1128.6 561.2 L1136.8 569.2 L1145.1 577.1 L1153.4 585.1 L1161.6 593.1 L1169.9 601.1 L1178.2 609.1 L1186.5 617.1 L1194.7 625.1 M1102.6 554.9 L1110.9 562.9 L1119.2 570.9 L1127.4 578.9 L1135.7 586.9 M1152.3 602.8 L1160.5 610.8 M1093.3 564.6 L1101.5 572.6 L1109.8 580.6 L1118.1 588.6 M1126.3 596.6 L1134.6 604.6 L1142.9 612.5 M1151.2 620.5 L1159.4 628.5 L1167.7 636.5 M1100.4 590.3 L1108.7 598.3 L1117.0 606.3 L1125.2 614.3 L1133.5 622.3 L1141.8 630.2 M1150.1 638.2 L1158.3 646.2 M1099.3 608.0 L1107.6 616.0 L1115.9 624.0 M1124.1 632.0 L1132.4 640.0 L1140.7 647.9 M1106.5 633.7 L1114.8 641.7 L1123.0 649.7 M1097.1 643.4 L1105.4 651.4 M1079.5 645.1 L1087.7 653.1 M1070.1 654.8 L1078.3 662.8 M1166.0 656.4 L1181.6 652.6 L1197.1 648.7 L1212.6 644.8 L1228.1 640.9 L1243.7 637.1 M1198.9 656.0 L1214.4 652.1 L1230.0 648.2 L1245.5 644.4 L1261.0 640.5 M1200.7 663.2 L1216.2 659.4 L1231.8 655.5 L1247.3 651.6 L1262.8 647.8 M1233.6 662.8 L1249.1 658.9 L1264.6 655.0 M1219.9 673.9 L1235.4 670.1 L1250.9 666.2 L1266.5 662.3 M1252.7 673.5 L1268.3 669.6 M1254.6 680.7 L1270.1 676.9 M1262.8 647.8 L1264.6 655.0 M1266.5 662.3 L1268.3 669.6 L1270.1 676.9 M1243.7 637.1 L1245.5 644.4 L1247.3 651.6 L1249.1 658.9 L1250.9 666.2 L1252.7 673.5 L1254.6 680.7 M1226.3 633.7 L1228.1 640.9 L1230.0 648.2 L1231.8 655.5 M1235.4 670.1 L1237.2 677.3 M1210.8 637.5 L1212.6 644.8 L1214.4 652.1 L1216.2 659.4 L1218.1 666.7 L1219.9 673.9 M1195.3 641.4 L1197.1 648.7 L1198.9 656.0 L1200.7 663.2 M1179.8 645.3 L1181.6 652.6 L1183.4 659.8 L1185.2 667.1 M1166.0 656.4 L1167.9 663.7 M1154.5 667.3 L1159.6 661.2 M1154.3 677.6 L1159.4 671.5 L1164.6 665.3 L1169.7 659.2 M1154.1 687.9 L1159.3 681.8 L1164.4 675.7 M1169.6 669.5 L1174.7 663.4 L1179.8 657.3 M1159.1 692.1 L1164.3 686.0 L1169.4 679.8 M1174.5 673.7 L1179.7 667.6 L1184.8 661.4 M1164.1 696.3 L1169.2 690.1 L1174.4 684.0 M1184.7 671.8 L1189.8 665.6 M1158.8 712.7 L1163.9 706.6 L1169.1 700.4 M1174.2 694.3 L1179.4 688.2 M1184.5 682.1 L1189.6 675.9 M1163.8 716.9 L1168.9 710.8 M1179.2 698.5 L1184.3 692.4 L1189.5 686.2 L1194.6 680.1 L1199.8 674.0 M1163.6 727.2 L1168.7 721.1 L1173.9 714.9 M1179.0 708.8 L1184.2 702.7 L1189.3 696.5 L1194.5 690.4 L1199.6 684.3 M1168.6 731.4 L1173.7 725.2 L1178.9 719.1 M1194.3 700.7 L1199.4 694.6 L1204.6 688.5 M1153.0 760.1 L1158.1 753.9 L1163.3 747.8 L1168.4 741.7 L1173.6 735.5 L1178.7 729.4 L1183.8 723.3 L1189.0 717.2 L1194.1 711.0 M1199.3 704.9 L1204.4 698.8 M1152.8 770.4 L1158.0 764.2 L1163.1 758.1 M1168.3 752.0 L1173.4 745.8 L1178.5 739.7 L1183.7 733.6 M1199.1 715.2 L1204.3 709.1 M1157.8 774.5 L1163.0 768.4 L1168.1 762.3 L1173.2 756.2 L1178.4 750.0 L1183.5 743.9 L1188.7 737.8 L1193.8 731.6 M1199.0 725.5 L1204.1 719.4 L1209.2 713.3 M1167.9 772.6 L1173.1 766.5 M1178.2 760.3 L1183.4 754.2 M1188.5 748.1 L1193.6 741.9 L1198.8 735.8 L1203.9 729.7 L1209.1 723.6 M1172.9 776.8 L1178.1 770.6 L1183.2 764.5 L1188.3 758.4 L1193.5 752.3 M1177.9 780.9 L1183.0 774.8 L1188.2 768.7 M1198.5 756.4 L1203.6 750.3 L1208.7 744.2 M1188.0 779.0 L1193.2 772.9 L1198.3 766.7 L1203.4 760.6 L1208.6 754.5 M1198.1 777.0 L1203.3 770.9 L1208.4 764.8 M1184.8 661.4 L1189.8 665.6 M1194.8 669.8 L1199.8 674.0 M1164.7 655.0 L1169.7 659.2 M1174.7 663.4 L1179.7 667.6 L1184.7 671.8 L1189.6 675.9 L1194.6 680.1 M1164.6 665.3 L1169.6 669.5 M1174.5 673.7 L1179.5 677.9 L1184.5 682.1 L1189.5 686.2 L1194.5 690.4 L1199.4 694.6 L1204.4 698.8 L1209.4 703.0 M1154.5 667.3 L1159.4 671.5 L1164.4 675.7 L1169.4 679.8 L1174.4 684.0 L1179.4 688.2 M1184.3 692.4 L1189.3 696.5 L1194.3 700.7 L1199.3 704.9 L1204.3 709.1 L1209.2 713.3 M1154.3 677.6 L1159.3 681.8 M1164.3 686.0 L1169.2 690.1 L1174.2 694.3 L1179.2 698.5 L1184.2 702.7 L1189.2 706.9 L1194.1 711.0 L1199.1 715.2 L1204.1 719.4 L1209.1 723.6 M1154.1 687.9 L1159.1 692.1 L1164.1 696.3 L1169.1 700.4 L1174.1 704.6 L1179.0 708.8 L1184.0 713.0 L1189.0 717.2 L1194.0 721.3 L1199.0 725.5 L1203.9 729.7 M1163.9 706.6 L1168.9 710.8 L1173.9 714.9 L1178.9 719.1 L1183.8 723.3 L1188.8 727.5 L1193.8 731.6 L1198.8 735.8 L1203.8 740.0 L1208.7 744.2 M1158.8 712.7 L1163.8 716.9 L1168.7 721.1 L1173.7 725.2 L1178.7 729.4 L1183.7 733.6 L1188.7 737.8 L1193.6 741.9 L1198.6 746.1 L1203.6 750.3 L1208.6 754.5 M1173.6 735.5 L1178.5 739.7 L1183.5 743.9 L1188.5 748.1 L1193.5 752.3 L1198.5 756.4 L1203.4 760.6 M1163.4 737.5 L1168.4 741.7 L1173.4 745.8 L1178.4 750.0 L1183.4 754.2 L1188.3 758.4 L1193.3 762.6 L1198.3 766.7 L1203.3 770.9 M1163.3 747.8 L1168.3 752.0 L1173.2 756.2 M1178.2 760.3 L1183.2 764.5 L1188.2 768.7 M1193.2 772.9 L1198.1 777.0 M1158.1 753.9 L1163.1 758.1 M1173.1 766.5 L1178.1 770.6 M1158.0 764.2 L1163.0 768.4 L1167.9 772.6 L1172.9 776.8 L1177.9 780.9 M1147.9 766.2 L1152.8 770.4 L1157.8 774.5 M1220.5 737.0 L1233.7 732.2 M1208.9 746.0 L1222.0 741.2 L1235.2 736.4 M1210.4 750.2 L1223.6 745.4 M1212.0 754.5 L1225.1 749.7 L1238.3 744.9 M1220.5 737.0 L1222.0 741.2 L1223.6 745.4 M1225.1 749.7 L1226.7 753.9 M1210.4 750.2 L1212.0 754.5 L1213.5 758.7 M1200.6 665.2 L1197.3 680.2 L1207.3 690.3 L1213.1 707.0 M1197.3 710.3 L1207.3 727.0 L1208.1 742.1 L1207.3 767.2 L1212.3 772.2 M1209.0 742.1 L1232.4 732.1 L1238.2 740.4 L1232.4 750.5 L1211.5 758.8 M1701.0 486.2 L1694.8 475.0 L1696.0 465.0 L1706.0 460.0 L1723.5 457.5 L1726.0 447.5 L1733.5 451.2 L1746.0 453.8 L1776.0 452.5 L1787.2 448.8 L1789.8 440.0 L1787.2 431.2 M1787.2 448.8 L1801.0 453.8 L1826.0 467.5 L1851.0 480.0 L1861.0 486.2 L1876.0 492.5 L1893.5 502.5 L1899.8 517.5 L1896.0 535.0 L1899.8 555.0 L1896.0 578.8 L1886.0 600.0 L1871.0 622.5 L1851.0 645.0 L1843.5 650.0 L1836.0 657.5 L1823.5 662.5 L1818.5 660.0 M1851.0 480.0 L1858.5 475.0 L1871.0 472.5 M1853.5 481.2 L1876.0 482.5 L1886.0 475.0 L1898.5 465.5 M1822.2 481.2 L1846.0 491.2 L1851.0 487.5 L1853.5 481.2 M1852.2 451.2 L1858.5 452.5 L1876.0 446.2 L1898.5 443.8 M1821.0 496.2 L1829.8 510.0 L1836.0 525.0 L1839.8 541.2 L1851.0 547.5 L1861.0 557.5 L1862.2 567.5 L1853.5 585.0 L1843.5 605.0 L1831.0 620.0 L1822.2 627.5 L1823.5 640.0 M1819.8 545.0 L1818.5 575.0 L1814.8 612.5 L1812.2 652.5 M1819.8 557.5 L1849.8 561.2 L1852.2 570.0 M1818.5 566.2 L1851.0 571.2 L1896.0 578.8 M1812.2 633.8 L1843.5 650.0 L1848.5 665.0 L1859.8 693.8 M1801.0 646.2 L1811.0 640.5 L1808.5 653.8 L1801.0 646.2 M1823.5 662.5 L1819.8 685.0 M1858.5 680.0 L1879.8 677.5 M1618.5 475.0 L1616.0 500.0 L1612.2 530.0 M1612.2 530.0 L1619.8 536.2 L1617.2 550.0 L1611.0 562.5 L1613.5 575.0 L1621.0 583.8 L1628.5 587.5 M1599.8 556.2 L1603.5 560.0 L1612.2 557.5 M1611.0 576.2 L1588.5 590.0 L1583.5 610.0 L1579.8 622.5 L1571.0 623.8 M1508.0 607.0 L1571.0 626.2 L1626.0 640.0 L1701.0 661.2 L1751.0 676.2 L1801.0 695.0 L1826.0 697.5 L1873.5 693.8 L1878.5 700.0 L1889.8 705.5 M1571.0 626.2 L1568.5 636.2 L1583.5 650.0 L1603.5 671.2 L1626.0 671.2 L1641.0 672.5 L1652.2 677.5 M1526.0 512.5 L1532.2 522.5 L1528.5 542.5 L1548.5 565.0 L1533.5 612.5 M1639.8 527.5 L1638.5 538.8 L1644.8 550.0 L1646.0 560.0 L1661.0 572.5 L1681.0 585.0 L1701.0 597.5 L1716.0 606.2 L1733.5 617.5 L1741.0 616.2 L1761.0 627.5 L1778.5 640.0 L1796.0 652.5 L1808.5 656.2 L1818.5 660.0 M1714.8 578.8 L1721.0 590.0 L1723.5 600.0 M1798.5 696.2 L1826.0 710.0 L1843.5 722.0 M1818.5 710.0 L1806.0 722.0 M1839.9 722.0 L1860.7 735.0 L1897.3 758.0 M1808.7 722.0 L1807.7 723.3 M1684.3 770.0 L1709.3 780.0 L1739.3 771.7 L1766.0 756.7 L1792.7 736.7 L1806.4 722.0 M1896.0 758.3 L1897.7 775.0 L1876.0 803.3 L1859.3 823.3 L1856.0 836.7 L1856.0 866.7 L1846.0 890.0 L1822.7 930.0 L1799.3 963.3 L1772.7 1000.0 L1749.3 1030.0 L1722.7 1066.7 L1706.0 1090.0 L1689.3 1096.7 L1672.7 1090.0 L1659.3 1096.7 L1642.7 1091.7 L1614.3 1105.0 M1851.3 771.3 L1860.3 770.8 L1869.2 770.3 L1878.2 769.9 L1887.2 769.4 M1842.7 779.7 L1851.7 779.3 L1860.7 778.8 L1869.7 778.3 L1878.7 777.9 L1887.6 777.4 L1896.6 776.9 M1870.1 786.3 L1879.1 785.9 M1886.0 767.3 L1887.4 775.2 L1888.8 783.1 M1878.5 776.8 L1879.9 784.6 L1881.3 792.5 M1868.3 770.5 L1869.7 778.3 L1871.1 786.2 M1859.4 772.0 L1860.8 779.9 M1850.6 773.6 L1851.9 781.5 M1876.0 768.3 L1881.0 758.3 L1889.3 756.7 M1881.0 766.7 L1891.0 770.0 M450.3 772.0 L487.7 779.7 L541.0 803.0 L601.0 813.0 L661.0 818.7 L701.0 815.3 L767.7 798.0 L834.3 781.3 L901.0 764.7 L921.0 758.0 L931.0 748.0 L947.7 721.3 L964.3 712.0 L1000.0 712.7 M951.0 558.0 L974.3 578.0 L997.7 593.0 L1000.0 598.2 M997.7 593.0 L1000.0 592.9 M1044.3 806.3 L1062.7 813.0 L1074.3 823.0 M1082.5 762.0 L1077.7 778.0 L1063.3 816.7 L1040.0 846.7 L996.7 890.0 L950.0 940.0 L907.7 987.0 L878.4 1023.0 L827.0 1074.2 L767.3 1111.4 M1062.5 762.0 L1051.0 785.0 L1045.0 808.0 L1017.7 838.0 L1006.0 853.0 M878.4 1023.0 L887.0 1035.8 L887.0 1061.4 L895.5 1082.8 L902.7 1093.4 M1436.7 724.3 L1463.3 743.3 L1496.7 763.3" fill="none" stroke="#ffec94" stroke-width="2.35" stroke-linejoin="round" stroke-linecap="round"/>
<path d="M530.0 178.3 L526.7 184.0 L532.7 195.7 L533.3 207.3 L563.3 211.7 L580.0 219.7 L581.7 225.7 L610.0 236.3 L612.0 239.7 L626.0 235.7 L627.7 249.7 L633.3 257.3 L646.7 263.0 L666.7 261.3 L668.3 259.0 L659.3 251.7 L662.7 248.3 L658.0 245.7 L663.3 239.0 L683.3 234.0 L726.7 233.0 L766.7 238.0 L776.7 243.3 L790.0 245.0 L795.0 239.0 L798.3 245.7 L820.0 254.0 L850.0 255.0 L861.7 247.3 L868.3 254.0 L908.3 257.3 L915.0 263.3 L943.3 274.0 L934.3 283.0 L946.7 290.7 L951.7 294.0 L960.0 299.0 L963.3 305.7 L968.3 294.7 L980.0 295.7 L996.7 299.0 L1013.3 290.0 L1018.3 290.7 L1025.0 299.7 L1036.7 293.0 L1046.7 295.7 L1063.3 314.0 L1071.7 314.0 L1081.7 323.0 L1086.7 324.0 L1093.3 336.3 L1123.3 339.0 L1126.7 350.7 L1140.0 359.7 L1150.0 355.7 L1160.0 340.7 L1166.7 338.3 L1168.3 349.0 L1160.0 382.3 L1146.7 402.3 L1151.7 412.3 L1178.0 422.3 M470.0 359.0 L500.0 370.7 L526.7 378.3 L566.7 379.7 L586.7 390.7 L620.0 412.3 L650.0 419.0 L666.7 427.3 L713.3 465.7 L733.3 472.3 L760.0 477.3 L800.0 502.3 L866.7 519.0 L916.7 539.0 L950.0 558.0 M997.3 336.3 L1021.7 339.0 L1033.3 344.0 L1035.7 359.0 L1045.0 369.0 L1046.7 395.7 L1044.0 422.3 L1046.7 439.0 L1047.1 440.0 M1164.4 440.0 L1165.0 435.7 L1168.3 427.3 L1178.0 419.0 M1536.3 178.3 L1576.3 188.3 L1574.7 199.0 L1588.0 209.0 L1614.7 216.3 L1623.0 225.7 L1619.7 234.0 L1661.3 240.7 L1666.3 247.3 L1684.7 257.3 L1708.0 260.7 L1711.3 272.3 L1703.0 292.3 L1701.3 302.3 L1683.0 303.0 L1681.3 310.7 L1698.0 317.3 L1718.0 322.3 L1743.0 330.7 L1741.3 337.3 L1698.0 342.3 L1678.0 343.0 L1658.0 350.7 L1621.3 360.7 L1608.0 362.3 L1578.0 357.3 L1538.0 354.0 L1526.3 345.7 L1519.7 355.7 L1523.0 367.3 L1508.0 369.0 L1489.7 375.7 L1466.3 365.7 L1458.0 369.0 L1448.0 365.7 L1423.0 372.3 L1414.7 379.0 L1404.7 374.0 L1408.0 382.3 L1394.7 395.7 L1391.3 400.7 M1391.3 400.7 L1388.0 394.0 L1393.0 392.3 L1384.7 375.7 L1374.7 362.3 L1364.7 355.7 L1359.7 345.7 L1358.0 335.7 L1354.7 325.7 L1359.7 315.7 L1369.7 310.7 L1408.0 312.3 L1441.3 307.3 L1489.7 309.0 L1511.3 322.3 L1524.7 328.3 L1566.3 325.7 L1581.3 337.3 L1589.7 339.0 L1593.0 347.3 L1606.3 349.0 L1613.0 359.0 M1364.7 355.7 L1358.0 359.0 L1344.7 362.3 L1334.7 369.0 L1324.7 375.7 L1304.7 375.7 M1249.7 288.3 L1239.7 295.7 L1238.0 302.3 L1229.7 307.3 L1231.3 312.3 L1244.7 319.0 L1239.7 325.7 L1243.0 339.0 L1254.7 345.7 L1256.3 352.3 L1244.7 355.7 L1228.0 359.0 L1208.0 355.7 L1198.0 359.0 L1188.0 369.0 L1184.7 382.3 L1181.3 405.7 L1171.3 422.3 M1208.0 355.7 L1209.7 375.7 L1214.7 379.0 L1244.7 379.7 M1208.0 355.7 L1194.7 377.3 L1211.3 378.3 M1228.0 359.0 L1223.0 370.7 L1233.0 377.3 L1244.7 379.7 M1214.7 379.0 L1238.0 385.7 L1249.7 395.7 L1256.3 409.0 L1248.0 424.0 L1259.7 434.0 L1271.3 435.7 L1276.3 422.3 L1274.7 405.7 L1288.0 395.7 L1301.3 385.7 L1303.0 375.7 M1333.0 321.7 L1324.7 324.0 L1319.7 335.7 L1314.0 342.3 L1313.0 355.7 L1314.7 365.7 L1309.7 372.3 L1303.0 375.7 M1303.0 375.7 L1311.3 382.3 L1314.7 395.7 L1318.0 405.7 L1324.7 410.7 L1321.3 429.0 L1319.1 440.0 M1416.4 440.0 L1418.0 439.7 L1418.4 440.0 M1508.0 486.9 L1524.7 489.0 M1508.0 500.7 L1508.0 500.7 L1514.7 509.0 L1526.0 514.7 M1075.0 823.3 L1086.7 840.0 L1092.7 853.3 L1092.7 876.7 L1091.7 903.3 L1086.7 936.7 L1076.7 966.7 L1065.0 988.3 L1068.3 1000.0 L1067.3 1010.0 L1080.0 1020.0 L1086.7 1016.7 L1091.7 1003.3 L1090.0 993.3 L1095.0 976.7 L1096.7 965.0 L1103.3 955.0 L1115.0 948.3 L1130.0 951.7 L1136.7 956.7 L1138.3 963.3 L1146.7 975.0 L1156.7 980.0 L1170.0 980.7 L1196.7 979.3 L1220.0 983.3 L1246.7 986.7 L1263.3 993.3 L1276.7 1000.0 L1283.3 998.3 L1288.3 1006.7 M1086.7 875.0 L1096.7 873.3 L1106.7 880.0 L1111.7 893.3 L1120.0 901.7 L1143.3 900.7 L1153.3 905.0 L1157.3 916.7 L1150.0 926.7 L1136.7 938.3 L1146.7 946.7 L1148.3 956.7 L1146.7 968.3 L1156.7 980.0 M1291.7 986.7 L1363.3 903.3 L1375.0 876.7 L1375.0 858.3 M1346.7 866.0 L1360.0 864.0 L1375.0 858.3 L1396.7 850.0 L1420.0 835.7 L1430.0 836.7 L1440.0 845.0 M1320.0 863.3 L1326.7 871.7 L1335.0 885.0 L1350.0 893.3 L1363.3 899.3 M1440.0 845.0 L1443.3 836.7 L1441.7 830.0 L1456.7 821.7 L1490.0 806.7 L1513.3 796.7 L1533.3 788.3 L1496.7 763.3 L1494.4 762.0 M1415.3 762.0 L1426.7 773.3 L1443.3 785.0 M1441.7 830.0 L1463.3 828.3 L1488.3 828.3 L1490.0 836.7 L1481.7 845.0 L1480.0 855.0 L1461.7 863.3 L1460.0 871.7 L1470.0 886.7 L1480.0 896.7 L1483.3 905.0 L1495.0 911.7 L1496.7 920.0 L1513.3 943.3 L1526.7 953.3 L1530.0 960.0 L1525.0 973.3 L1526.7 983.3 L1523.3 1000.0 L1500.0 1030.0 L1501.7 1050.0 L1510.0 1063.3 L1505.0 1076.7 L1490.0 1078.3 L1480.0 1088.3 L1460.0 1093.3 L1450.0 1086.7 L1396.7 1037.3 L1390.0 1038.3 L1376.7 1051.7 L1330.0 1061.7 L1300.0 1065.0 L1290.0 1065.0 L1276.7 1056.7 M1291.7 986.7 L1288.3 976.7 L1280.0 968.3 L1273.3 968.3 L1250.0 986.7 M1273.3 973.3 L1266.7 986.7 L1271.7 996.7 L1280.0 1000.0 M1278.3 973.3 L1276.7 986.7 L1283.3 995.0 M1291.7 986.7 L1293.3 1003.3 L1305.0 1015.0 L1286.7 1030.0 L1296.7 1043.3 L1301.7 1053.3 L1300.0 1065.0 M1288.3 1010.0 L1276.7 1023.3 L1270.0 1036.7 L1268.3 1048.3 L1256.7 1058.3 L1240.0 1059.3 L1270.0 1026.7 L1283.3 1023.3 M1083.3 773.3 L1085.0 780.0 L1078.3 781.7 L1076.7 775.0 L1083.3 773.3 M1086.0 797.3 L1076.7 821.7 M1043.3 808.3 L1075.0 823.3 M1046.2 440.0 L1053.8 457.5 L1067.5 477.5 L1082.5 497.5 L1093.8 511.2 L1107.5 513.8 L1120.0 512.5 L1127.5 517.5 L1140.0 535.0 M1110.0 508.8 L1117.5 495.0 L1135.0 482.5 L1162.5 470.0 L1200.0 461.2 L1212.5 460.0 L1225.0 472.5 L1232.5 480.0 L1240.0 491.2 L1243.8 505.0 L1247.5 515.0 M1162.5 470.0 L1165.0 455.0 L1163.8 440.0 M1067.5 477.5 L1050.0 487.5 L1035.0 510.0 L1030.0 525.0 L1026.2 550.0 L1018.8 592.5 M1000.0 595.0 L1018.8 592.5 L1050.0 587.5 L1077.5 583.0 L1090.0 587.5 M1007.5 536.2 L1022.5 538.8 L1027.5 542.5 M1063.8 567.5 L1051.2 588.8 M1030.0 525.0 L1037.5 552.5 L1051.2 588.8 L1087.5 610.0 L1110.0 625.0 L1122.5 630.0 M1000.0 597.5 L1006.2 610.0 L1002.5 630.0 L1007.5 652.5 L1022.5 675.0 L1042.5 692.5 L1065.0 717.5 L1090.0 740.0 M1000.0 712.5 L1020.0 712.5 L1030.0 705.0 L1041.2 700.0 L1053.8 715.0 L1053.8 721.2 M1042.5 692.5 L1060.0 690.0 L1085.0 697.5 L1097.5 702.5 M1041.2 715.0 L1037.5 741.2 L1043.8 743.2 M1253.8 452.5 L1260.0 470.0 L1262.5 482.5 L1270.0 493.8 M1313.8 412.0 L1310.0 430.0 L1310.0 440.0 L1307.5 450.0 L1308.8 462.5 L1322.5 467.5 L1335.0 472.5 L1350.0 480.0 L1363.8 491.2 L1360.0 505.0 L1357.5 520.0 L1337.5 525.0 L1331.2 535.0 L1327.5 552.5 L1322.5 562.5 L1316.2 567.5 M1320.5 438.5 L1317.5 452.5 L1350.0 448.8 L1382.5 446.2 L1412.5 441.2 M1382.5 446.2 L1380.0 460.0 L1385.0 471.2 M1412.5 441.2 L1425.0 448.8 L1445.0 457.5 L1462.5 477.5 L1470.0 493.8 L1467.5 525.0 L1460.0 557.5 L1450.0 586.2 M1508.0 485.0 L1497.5 486.2 L1496.2 497.5 L1508.0 500.0 M1496.2 498.8 L1485.0 502.5 L1472.5 527.5 M1062.5 762.0 L1100.0 708.8 L1132.5 665.0 L1155.0 647.5 L1180.0 632.5 L1207.5 615.0 L1225.0 603.8 L1250.0 595.0 L1275.0 587.5 L1312.5 581.2 L1350.0 577.5 L1380.0 576.2 L1412.5 578.8 L1450.0 586.2 L1475.0 592.5 L1508.0 606.2 M1082.5 762.0 L1110.0 715.0 L1140.0 672.5 L1162.5 652.5 L1190.0 633.8 L1225.0 607.5 L1250.0 597.0 M1200.0 625.0 L1210.0 623.0 L1209.0 618.0 L1200.0 621.2 M1316.2 567.5 L1325.0 571.2 L1350.0 571.2 L1370.0 569.5 L1377.5 572.5 L1380.0 580.0 L1375.0 587.5 L1360.0 597.5 L1353.8 607.5 L1357.5 620.0 L1375.0 657.5 L1405.0 690.0 L1436.2 723.8 M1436.2 723.8 L1425.0 735.0 L1410.0 752.5 L1415.0 762.0 M1235.0 680.0 L1250.0 692.5 L1262.5 703.8 L1282.5 705.5 L1295.0 712.5 L1311.2 726.2 M1180.0 632.5 L1190.0 642.5 L1200.0 647.5 M1126.5 528.6 L1137.0 520.1 M1091.8 571.5 L1102.2 563.0 M1112.7 554.5 L1123.2 546.0 M1133.7 537.5 L1144.2 529.0 M1154.7 520.5 L1165.2 512.0 M1109.5 571.9 L1120.0 563.4 M1141.0 546.4 L1151.5 538.0 L1161.9 529.5 M1182.9 512.5 L1193.4 504.0 L1203.9 495.5 M1095.7 597.9 L1106.2 589.4 L1116.7 580.9 L1127.2 572.4 M1137.7 563.9 L1148.2 555.4 L1158.7 546.9 M1179.7 529.9 L1190.2 521.4 L1200.7 512.9 M1211.1 504.4 L1221.6 495.9 M1103.0 606.8 L1113.5 598.3 L1124.0 589.8 L1134.5 581.3 M1165.9 555.8 L1176.4 547.3 L1186.9 538.8 L1197.4 530.3 L1207.9 521.8 L1218.4 513.3 L1228.9 504.9 L1239.4 496.4 L1249.9 487.9 M1099.7 624.2 L1110.2 615.7 L1120.7 607.2 L1131.2 598.7 L1141.7 590.3 L1152.2 581.8 L1162.7 573.3 M1173.2 564.8 L1183.7 556.3 L1194.1 547.8 M1204.6 539.3 L1215.1 530.8 M1225.6 522.3 L1236.1 513.8 L1246.6 505.3 L1257.1 496.8 L1267.6 488.3 M1075.5 658.7 L1086.0 650.2 L1096.5 641.7 L1107.0 633.2 L1117.5 624.7 L1127.9 616.2 L1138.4 607.7 L1148.9 599.2 L1159.4 590.7 L1169.9 582.2 M1180.4 573.7 L1190.9 565.2 L1201.4 556.7 L1211.9 548.2 L1222.4 539.7 L1232.9 531.2 L1243.3 522.7 L1253.8 514.2 M1264.3 505.7 L1274.8 497.2 M1114.2 642.1 L1124.7 633.6 M1145.7 616.6 L1156.2 608.1 L1166.7 599.6 M1177.1 591.1 L1187.6 582.6 L1198.1 574.1 L1208.6 565.6 L1219.1 557.1 L1229.6 548.7 L1240.1 540.2 L1250.6 531.7 L1261.1 523.2 L1271.6 514.7 L1282.1 506.2 M1324.0 472.2 L1334.5 463.7 M1131.9 642.5 L1142.4 634.1 L1152.9 625.6 M1163.4 617.1 L1173.9 608.6 L1184.4 600.1 L1194.9 591.6 L1205.4 583.1 L1215.9 574.6 L1226.3 566.1 L1236.8 557.6 L1247.3 549.1 M1257.8 540.6 L1268.3 532.1 L1278.8 523.6 L1289.3 515.1 L1299.8 506.6 L1310.3 498.1 L1320.8 489.6 M1149.7 643.0 L1160.1 634.5 M1202.1 600.5 L1212.6 592.0 M1254.6 558.0 L1265.1 549.5 M1275.6 541.0 L1286.0 532.5 L1296.5 524.0 M1307.0 515.6 L1317.5 507.1 L1328.0 498.6 L1338.5 490.1 M1198.9 617.9 L1209.3 609.4 L1219.8 601.0 L1230.3 592.5 L1240.8 584.0 M1261.8 567.0 L1272.3 558.5 L1282.8 550.0 L1293.3 541.5 M1258.6 584.4 L1269.0 575.9 L1279.5 567.4 M1290.0 558.9 L1300.5 550.4 M1286.8 576.3 L1297.3 567.9 L1307.8 559.4 M1318.9 463.4 L1327.1 471.4 L1335.4 479.4 L1343.7 487.4 L1351.9 495.4 M1317.8 481.1 L1326.0 489.1 L1334.3 497.1 L1342.6 505.1 L1350.8 513.1 M1308.4 490.8 L1316.6 498.8 L1324.9 506.8 M1282.5 484.6 L1290.7 492.6 L1299.0 500.6 L1307.3 508.5 L1315.5 516.5 M1273.1 494.3 L1281.3 502.3 L1289.6 510.3 M1255.4 496.0 L1263.7 504.0 L1272.0 512.0 L1280.2 520.0 L1288.5 528.0 M1229.5 489.7 L1237.8 497.7 L1246.0 505.7 L1254.3 513.7 L1262.6 521.7 L1270.9 529.7 M1304.0 561.6 L1312.2 569.6 M1211.9 491.5 L1220.1 499.5 L1228.4 507.4 L1236.7 515.4 L1244.9 523.4 L1253.2 531.4 M1261.5 539.4 L1269.8 547.4 L1278.0 555.4 L1286.3 563.4 L1294.6 571.4 L1302.8 579.3 M1210.7 509.2 L1219.0 517.2 L1227.3 525.1 L1235.6 533.1 L1243.8 541.1 L1252.1 549.1 L1260.4 557.1 L1268.7 565.1 L1276.9 573.1 M1201.4 518.9 L1209.6 526.9 L1217.9 534.9 M1226.2 542.8 L1234.5 550.8 L1242.7 558.8 L1251.0 566.8 L1259.3 574.8 L1267.5 582.8 M1183.7 520.6 L1192.0 528.6 L1200.3 536.6 L1208.5 544.6 L1216.8 552.6 L1225.1 560.5 L1233.4 568.5 L1241.6 576.5 M1157.8 514.3 L1166.1 522.3 L1174.3 530.3 M1182.6 538.3 L1190.9 546.3 L1199.2 554.3 L1207.4 562.3 M1215.7 570.3 L1224.0 578.2 L1232.2 586.2 L1240.5 594.2 M1140.1 516.1 L1148.4 524.0 L1156.7 532.0 L1165.0 540.0 L1173.2 548.0 L1181.5 556.0 L1189.8 564.0 L1198.1 572.0 M1206.3 580.0 L1214.6 588.0 M1122.5 517.8 L1130.8 525.8 M1139.0 533.8 L1147.3 541.7 L1155.6 549.7 L1163.9 557.7 L1172.1 565.7 L1180.4 573.7 L1188.7 581.7 L1196.9 589.7 M1205.2 597.7 L1213.5 605.7 M1137.9 551.5 L1146.2 559.4 L1154.5 567.4 L1162.7 575.4 L1171.0 583.4 L1179.3 591.4 L1187.6 599.4 L1195.8 607.4 L1204.1 615.4 M1112.0 545.2 L1120.3 553.2 L1128.6 561.2 L1136.8 569.2 L1145.1 577.1 L1153.4 585.1 L1161.6 593.1 L1169.9 601.1 L1178.2 609.1 L1186.5 617.1 L1194.7 625.1 M1102.6 554.9 L1110.9 562.9 L1119.2 570.9 L1127.4 578.9 L1135.7 586.9 M1152.3 602.8 L1160.5 610.8 M1093.3 564.6 L1101.5 572.6 L1109.8 580.6 L1118.1 588.6 M1126.3 596.6 L1134.6 604.6 L1142.9 612.5 M1151.2 620.5 L1159.4 628.5 L1167.7 636.5 M1100.4 590.3 L1108.7 598.3 L1117.0 606.3 L1125.2 614.3 L1133.5 622.3 L1141.8 630.2 M1150.1 638.2 L1158.3 646.2 M1099.3 608.0 L1107.6 616.0 L1115.9 624.0 M1124.1 632.0 L1132.4 640.0 L1140.7 647.9 M1106.5 633.7 L1114.8 641.7 L1123.0 649.7 M1097.1 643.4 L1105.4 651.4 M1079.5 645.1 L1087.7 653.1 M1070.1 654.8 L1078.3 662.8 M1166.0 656.4 L1181.6 652.6 L1197.1 648.7 L1212.6 644.8 L1228.1 640.9 L1243.7 637.1 M1198.9 656.0 L1214.4 652.1 L1230.0 648.2 L1245.5 644.4 L1261.0 640.5 M1200.7 663.2 L1216.2 659.4 L1231.8 655.5 L1247.3 651.6 L1262.8 647.8 M1233.6 662.8 L1249.1 658.9 L1264.6 655.0 M1219.9 673.9 L1235.4 670.1 L1250.9 666.2 L1266.5 662.3 M1252.7 673.5 L1268.3 669.6 M1254.6 680.7 L1270.1 676.9 M1262.8 647.8 L1264.6 655.0 M1266.5 662.3 L1268.3 669.6 L1270.1 676.9 M1243.7 637.1 L1245.5 644.4 L1247.3 651.6 L1249.1 658.9 L1250.9 666.2 L1252.7 673.5 L1254.6 680.7 M1226.3 633.7 L1228.1 640.9 L1230.0 648.2 L1231.8 655.5 M1235.4 670.1 L1237.2 677.3 M1210.8 637.5 L1212.6 644.8 L1214.4 652.1 L1216.2 659.4 L1218.1 666.7 L1219.9 673.9 M1195.3 641.4 L1197.1 648.7 L1198.9 656.0 L1200.7 663.2 M1179.8 645.3 L1181.6 652.6 L1183.4 659.8 L1185.2 667.1 M1166.0 656.4 L1167.9 663.7 M1154.5 667.3 L1159.6 661.2 M1154.3 677.6 L1159.4 671.5 L1164.6 665.3 L1169.7 659.2 M1154.1 687.9 L1159.3 681.8 L1164.4 675.7 M1169.6 669.5 L1174.7 663.4 L1179.8 657.3 M1159.1 692.1 L1164.3 686.0 L1169.4 679.8 M1174.5 673.7 L1179.7 667.6 L1184.8 661.4 M1164.1 696.3 L1169.2 690.1 L1174.4 684.0 M1184.7 671.8 L1189.8 665.6 M1158.8 712.7 L1163.9 706.6 L1169.1 700.4 M1174.2 694.3 L1179.4 688.2 M1184.5 682.1 L1189.6 675.9 M1163.8 716.9 L1168.9 710.8 M1179.2 698.5 L1184.3 692.4 L1189.5 686.2 L1194.6 680.1 L1199.8 674.0 M1163.6 727.2 L1168.7 721.1 L1173.9 714.9 M1179.0 708.8 L1184.2 702.7 L1189.3 696.5 L1194.5 690.4 L1199.6 684.3 M1168.6 731.4 L1173.7 725.2 L1178.9 719.1 M1194.3 700.7 L1199.4 694.6 L1204.6 688.5 M1153.0 760.1 L1158.1 753.9 L1163.3 747.8 L1168.4 741.7 L1173.6 735.5 L1178.7 729.4 L1183.8 723.3 L1189.0 717.2 L1194.1 711.0 M1199.3 704.9 L1204.4 698.8 M1152.8 770.4 L1158.0 764.2 L1163.1 758.1 M1168.3 752.0 L1173.4 745.8 L1178.5 739.7 L1183.7 733.6 M1199.1 715.2 L1204.3 709.1 M1157.8 774.5 L1163.0 768.4 L1168.1 762.3 L1173.2 756.2 L1178.4 750.0 L1183.5 743.9 L1188.7 737.8 L1193.8 731.6 M1199.0 725.5 L1204.1 719.4 L1209.2 713.3 M1167.9 772.6 L1173.1 766.5 M1178.2 760.3 L1183.4 754.2 M1188.5 748.1 L1193.6 741.9 L1198.8 735.8 L1203.9 729.7 L1209.1 723.6 M1172.9 776.8 L1178.1 770.6 L1183.2 764.5 L1188.3 758.4 L1193.5 752.3 M1177.9 780.9 L1183.0 774.8 L1188.2 768.7 M1198.5 756.4 L1203.6 750.3 L1208.7 744.2 M1188.0 779.0 L1193.2 772.9 L1198.3 766.7 L1203.4 760.6 L1208.6 754.5 M1198.1 777.0 L1203.3 770.9 L1208.4 764.8 M1184.8 661.4 L1189.8 665.6 M1194.8 669.8 L1199.8 674.0 M1164.7 655.0 L1169.7 659.2 M1174.7 663.4 L1179.7 667.6 L1184.7 671.8 L1189.6 675.9 L1194.6 680.1 M1164.6 665.3 L1169.6 669.5 M1174.5 673.7 L1179.5 677.9 L1184.5 682.1 L1189.5 686.2 L1194.5 690.4 L1199.4 694.6 L1204.4 698.8 L1209.4 703.0 M1154.5 667.3 L1159.4 671.5 L1164.4 675.7 L1169.4 679.8 L1174.4 684.0 L1179.4 688.2 M1184.3 692.4 L1189.3 696.5 L1194.3 700.7 L1199.3 704.9 L1204.3 709.1 L1209.2 713.3 M1154.3 677.6 L1159.3 681.8 M1164.3 686.0 L1169.2 690.1 L1174.2 694.3 L1179.2 698.5 L1184.2 702.7 L1189.2 706.9 L1194.1 711.0 L1199.1 715.2 L1204.1 719.4 L1209.1 723.6 M1154.1 687.9 L1159.1 692.1 L1164.1 696.3 L1169.1 700.4 L1174.1 704.6 L1179.0 708.8 L1184.0 713.0 L1189.0 717.2 L1194.0 721.3 L1199.0 725.5 L1203.9 729.7 M1163.9 706.6 L1168.9 710.8 L1173.9 714.9 L1178.9 719.1 L1183.8 723.3 L1188.8 727.5 L1193.8 731.6 L1198.8 735.8 L1203.8 740.0 L1208.7 744.2 M1158.8 712.7 L1163.8 716.9 L1168.7 721.1 L1173.7 725.2 L1178.7 729.4 L1183.7 733.6 L1188.7 737.8 L1193.6 741.9 L1198.6 746.1 L1203.6 750.3 L1208.6 754.5 M1173.6 735.5 L1178.5 739.7 L1183.5 743.9 L1188.5 748.1 L1193.5 752.3 L1198.5 756.4 L1203.4 760.6 M1163.4 737.5 L1168.4 741.7 L1173.4 745.8 L1178.4 750.0 L1183.4 754.2 L1188.3 758.4 L1193.3 762.6 L1198.3 766.7 L1203.3 770.9 M1163.3 747.8 L1168.3 752.0 L1173.2 756.2 M1178.2 760.3 L1183.2 764.5 L1188.2 768.7 M1193.2 772.9 L1198.1 777.0 M1158.1 753.9 L1163.1 758.1 M1173.1 766.5 L1178.1 770.6 M1158.0 764.2 L1163.0 768.4 L1167.9 772.6 L1172.9 776.8 L1177.9 780.9 M1147.9 766.2 L1152.8 770.4 L1157.8 774.5 M1220.5 737.0 L1233.7 732.2 M1208.9 746.0 L1222.0 741.2 L1235.2 736.4 M1210.4 750.2 L1223.6 745.4 M1212.0 754.5 L1225.1 749.7 L1238.3 744.9 M1220.5 737.0 L1222.0 741.2 L1223.6 745.4 M1225.1 749.7 L1226.7 753.9 M1210.4 750.2 L1212.0 754.5 L1213.5 758.7 M1200.6 665.2 L1197.3 680.2 L1207.3 690.3 L1213.1 707.0 M1197.3 710.3 L1207.3 727.0 L1208.1 742.1 L1207.3 767.2 L1212.3 772.2 M1209.0 742.1 L1232.4 732.1 L1238.2 740.4 L1232.4 750.5 L1211.5 758.8 M1701.0 486.2 L1694.8 475.0 L1696.0 465.0 L1706.0 460.0 L1723.5 457.5 L1726.0 447.5 L1733.5 451.2 L1746.0 453.8 L1776.0 452.5 L1787.2 448.8 L1789.8 440.0 L1787.2 431.2 M1787.2 448.8 L1801.0 453.8 L1826.0 467.5 L1851.0 480.0 L1861.0 486.2 L1876.0 492.5 L1893.5 502.5 L1899.8 517.5 L1896.0 535.0 L1899.8 555.0 L1896.0 578.8 L1886.0 600.0 L1871.0 622.5 L1851.0 645.0 L1843.5 650.0 L1836.0 657.5 L1823.5 662.5 L1818.5 660.0 M1851.0 480.0 L1858.5 475.0 L1871.0 472.5 M1853.5 481.2 L1876.0 482.5 L1886.0 475.0 L1898.5 465.5 M1822.2 481.2 L1846.0 491.2 L1851.0 487.5 L1853.5 481.2 M1852.2 451.2 L1858.5 452.5 L1876.0 446.2 L1898.5 443.8 M1821.0 496.2 L1829.8 510.0 L1836.0 525.0 L1839.8 541.2 L1851.0 547.5 L1861.0 557.5 L1862.2 567.5 L1853.5 585.0 L1843.5 605.0 L1831.0 620.0 L1822.2 627.5 L1823.5 640.0 M1819.8 545.0 L1818.5 575.0 L1814.8 612.5 L1812.2 652.5 M1819.8 557.5 L1849.8 561.2 L1852.2 570.0 M1818.5 566.2 L1851.0 571.2 L1896.0 578.8 M1812.2 633.8 L1843.5 650.0 L1848.5 665.0 L1859.8 693.8 M1801.0 646.2 L1811.0 640.5 L1808.5 653.8 L1801.0 646.2 M1823.5 662.5 L1819.8 685.0 M1858.5 680.0 L1879.8 677.5 M1618.5 475.0 L1616.0 500.0 L1612.2 530.0 M1612.2 530.0 L1619.8 536.2 L1617.2 550.0 L1611.0 562.5 L1613.5 575.0 L1621.0 583.8 L1628.5 587.5 M1599.8 556.2 L1603.5 560.0 L1612.2 557.5 M1611.0 576.2 L1588.5 590.0 L1583.5 610.0 L1579.8 622.5 L1571.0 623.8 M1508.0 607.0 L1571.0 626.2 L1626.0 640.0 L1701.0 661.2 L1751.0 676.2 L1801.0 695.0 L1826.0 697.5 L1873.5 693.8 L1878.5 700.0 L1889.8 705.5 M1571.0 626.2 L1568.5 636.2 L1583.5 650.0 L1603.5 671.2 L1626.0 671.2 L1641.0 672.5 L1652.2 677.5 M1526.0 512.5 L1532.2 522.5 L1528.5 542.5 L1548.5 565.0 L1533.5 612.5 M1639.8 527.5 L1638.5 538.8 L1644.8 550.0 L1646.0 560.0 L1661.0 572.5 L1681.0 585.0 L1701.0 597.5 L1716.0 606.2 L1733.5 617.5 L1741.0 616.2 L1761.0 627.5 L1778.5 640.0 L1796.0 652.5 L1808.5 656.2 L1818.5 660.0 M1714.8 578.8 L1721.0 590.0 L1723.5 600.0 M1798.5 696.2 L1826.0 710.0 L1843.5 722.0 M1818.5 710.0 L1806.0 722.0 M1839.9 722.0 L1860.7 735.0 L1897.3 758.0 M1808.7 722.0 L1807.7 723.3 M1684.3 770.0 L1709.3 780.0 L1739.3 771.7 L1766.0 756.7 L1792.7 736.7 L1806.4 722.0 M1896.0 758.3 L1897.7 775.0 L1876.0 803.3 L1859.3 823.3 L1856.0 836.7 L1856.0 866.7 L1846.0 890.0 L1822.7 930.0 L1799.3 963.3 L1772.7 1000.0 L1749.3 1030.0 L1722.7 1066.7 L1706.0 1090.0 L1689.3 1096.7 L1672.7 1090.0 L1659.3 1096.7 L1642.7 1091.7 L1614.3 1105.0 M1851.3 771.3 L1860.3 770.8 L1869.2 770.3 L1878.2 769.9 L1887.2 769.4 M1842.7 779.7 L1851.7 779.3 L1860.7 778.8 L1869.7 778.3 L1878.7 777.9 L1887.6 777.4 L1896.6 776.9 M1870.1 786.3 L1879.1 785.9 M1886.0 767.3 L1887.4 775.2 L1888.8 783.1 M1878.5 776.8 L1879.9 784.6 L1881.3 792.5 M1868.3 770.5 L1869.7 778.3 L1871.1 786.2 M1859.4 772.0 L1860.8 779.9 M1850.6 773.6 L1851.9 781.5 M1876.0 768.3 L1881.0 758.3 L1889.3 756.7 M1881.0 766.7 L1891.0 770.0 M450.3 772.0 L487.7 779.7 L541.0 803.0 L601.0 813.0 L661.0 818.7 L701.0 815.3 L767.7 798.0 L834.3 781.3 L901.0 764.7 L921.0 758.0 L931.0 748.0 L947.7 721.3 L964.3 712.0 L1000.0 712.7 M951.0 558.0 L974.3 578.0 L997.7 593.0 L1000.0 598.2 M997.7 593.0 L1000.0 592.9 M1044.3 806.3 L1062.7 813.0 L1074.3 823.0 M1082.5 762.0 L1077.7 778.0 L1063.3 816.7 L1040.0 846.7 L996.7 890.0 L950.0 940.0 L907.7 987.0 L878.4 1023.0 L827.0 1074.2 L767.3 1111.4 M1062.5 762.0 L1051.0 785.0 L1045.0 808.0 L1017.7 838.0 L1006.0 853.0 M878.4 1023.0 L887.0 1035.8 L887.0 1061.4 L895.5 1082.8 L902.7 1093.4 M1436.7 724.3 L1463.3 743.3 L1496.7 763.3" fill="none" stroke="#c3c3cd" stroke-width="1.75" stroke-dasharray="1.6 1.1" stroke-linejoin="round"/>
<ellipse cx="1760.3" cy="435" rx="5.5" ry="4.5" fill="url(#wp)" stroke="#1b2f6e" stroke-width="1"/>
<circle cx="1871" cy="472.5" r="3" fill="url(#wp)" stroke="#1b2f6e" stroke-width="1"/>
<circle cx="1436.7" cy="724.3" r="3.5" fill="#4d8b53" stroke="#fff" stroke-width="0.8"/>
<circle cx="1444.3" cy="848.3" r="4" fill="#4d8b53" stroke="#fff" stroke-width="1.6"/>
<circle cx="1292.3" cy="1015.0" r="4" fill="#4d8b53" stroke="#fff" stroke-width="1.6"/>
<circle cx="1182.5" cy="557.0" r="3.5" fill="#4d8b53" stroke="#fff" stroke-width="0.8"/>
<circle cx="1208.3" cy="655.0" r="3.5" fill="#4d8b53" stroke="#fff" stroke-width="0.8"/>
<circle cx="1877.7" cy="752.3" r="3.5" fill="#4d8b53" stroke="#fff" stroke-width="0.8"/>
<g style="opacity:0.995">
<text x="1187.5" y="551.5" font-family="Liberation Sans, sans-serif" font-size="15.5" font-style="italic" textLength="86" lengthAdjust="spacingAndGlyphs" fill="#fff" stroke="#6b6b6b" stroke-width="2" stroke-linejoin="round" paint-order="stroke">Swellendam</text>
<text x="1212.0" y="649.5" font-family="Liberation Sans, sans-serif" font-size="14" textLength="43" lengthAdjust="spacingAndGlyphs" fill="#fff" stroke="#6b6b6b" stroke-width="2" stroke-linejoin="round" paint-order="stroke">Railton</text>
<text x="1439.5" y="719.3" font-family="Liberation Sans, sans-serif" font-size="12" textLength="206.5" lengthAdjust="spacingAndGlyphs" fill="#fff" stroke="#6b6b6b" stroke-width="2" stroke-linejoin="round" paint-order="stroke">Bontebok National Park Entrance Gate</text>
<text x="1448.0" y="843.3" font-family="Liberation Sans, sans-serif" font-size="12" textLength="225.5" lengthAdjust="spacingAndGlyphs" fill="#fff" stroke="#6b6b6b" stroke-width="2" stroke-linejoin="round" paint-order="stroke">Bontebok National Park Reception &amp; Shop</text>
<text x="1295.7" y="1010.7" font-family="Liberation Sans, sans-serif" font-size="10" textLength="130" lengthAdjust="spacingAndGlyphs" fill="#fff" stroke="#6b6b6b" stroke-width="2" stroke-linejoin="round" paint-order="stroke">Lang Elsies Kraal Rest Camp</text>
<text x="1881.0" y="747.0" font-family="Liberation Sans, sans-serif" font-size="15.5" font-style="italic" textLength="104" lengthAdjust="spacingAndGlyphs" fill="#fff" stroke="#6b6b6b" stroke-width="2" stroke-linejoin="round" paint-order="stroke">Buffeljagsrivier</text>
</g>
</g></svg>
<svg class="abs" style="left:0;top:0" width="2034" height="1288" viewBox="0 0 2034 1288"><defs><linearGradient id="pressed" x1="0" y1="0" x2="0" y2="1"><stop offset="0" stop-color="#c4c4c4"/><stop offset="1" stop-color="#a9a9a9"/></linearGradient></defs><rect x="65.0" y="64.0" width="2" height="2" fill="#adadad"/><rect x="64.0" y="63.0" width="2" height="2" fill="#fbfbfb"/><rect x="68.0" y="67.0" width="2" height="2" fill="#adadad"/><rect x="67.0" y="66.0" width="2" height="2" fill="#fbfbfb"/><rect x="65.0" y="70.0" width="2" height="2" fill="#adadad"/><rect x="64.0" y="69.0" width="2" height="2" fill="#fbfbfb"/><rect x="68.0" y="73.0" width="2" height="2" fill="#adadad"/><rect x="67.0" y="72.0" width="2" height="2" fill="#fbfbfb"/><rect x="65.0" y="76.0" width="2" height="2" fill="#adadad"/><rect x="64.0" y="75.0" width="2" height="2" fill="#fbfbfb"/><rect x="68.0" y="79.0" width="2" height="2" fill="#adadad"/><rect x="67.0" y="78.0" width="2" height="2" fill="#fbfbfb"/><rect x="65.0" y="82.0" width="2" height="2" fill="#adadad"/><rect x="64.0" y="81.0" width="2" height="2" fill="#fbfbfb"/><rect x="68.0" y="85.0" width="2" height="2" fill="#adadad"/><rect x="67.0" y="84.0" width="2" height="2" fill="#fbfbfb"/>
<g transform="translate(77.0,64.0)"><path d="M0.5 0.5 H12.5 L17.5 5.5 V21.5 H0.5 Z" fill="#fff" stroke="#5a5a5a"/><path d="M12.5 0.5 V5.5 H17.5" fill="#ececec" stroke="#5a5a5a"/></g>
<g transform="translate(112.5,66.0)"><path d="M1 16 V1.5 Q1 0.5 2 0.5 H8 L9.5 3 H18 Q19 3 19 4 V6" fill="#f3c73b" stroke="#d3a82a"/><path d="M0.8 16.5 L3.8 6 H22.5 L19.8 16.5 Z" fill="#fdd94f" stroke="#d9ae2e" stroke-linejoin="round"/></g>
<g transform="translate(152.0,63.0)"><rect x="0.5" y="0.5" width="20" height="21" rx="2" fill="#6c97d0" stroke="#3c68a5"/><rect x="3.5" y="1" width="14" height="9" fill="#f4f4f4" stroke="#b9c6d8" stroke-width="0.6"/><path d="M5 3.2h11 M5 5.4h11 M5 7.6h11" stroke="#555" stroke-width="1"/><rect x="4.5" y="13.5" width="12" height="7" fill="#eef1f6" stroke="#3c68a5" stroke-width="0.6"/><rect x="6.5" y="14.8" width="2.6" height="5" fill="#27457a"/></g>
<g transform="translate(190.0,63.0)"><rect x="0.5" y="0.5" width="20" height="21" rx="2" fill="#6c97d0" stroke="#3c68a5"/><rect x="3.5" y="1" width="14" height="9" fill="#f4f4f4" stroke="#b9c6d8" stroke-width="0.6"/><path d="M5 3.2h11 M5 5.4h11 M5 7.6h11" stroke="#555" stroke-width="1"/><rect x="4.5" y="13.5" width="12" height="7" fill="#eef1f6" stroke="#3c68a5" stroke-width="0.6"/><rect x="6.5" y="14.8" width="2.6" height="5" fill="#27457a"/></g>
<rect x="202.0" y="77.0" width="10" height="10" rx="2" fill="#5a9a5a" stroke="#5a9a5a" stroke-width="0.8"/><path d="M204.5 84.5 l5 -5" stroke="#fff" stroke-width="2.2" stroke-linecap="round"/>
<g transform="translate(226.0,64.5)"><path d="M0.5 0.5 H16.5 L21.5 5.5 V15 H0.5 Z" fill="#fff" stroke="#6a6a6a"/><path d="M16.5 0.5 V5.5 H21.5" fill="#eee" stroke="#6a6a6a"/></g>
<rect x="240.0" y="77.0" width="10" height="10" rx="2" fill="#d2a81e" stroke="#d2a81e" stroke-width="0.8"/><g stroke="#fff" stroke-width="1.7"><path d="M245.0 78.5 v7 M242.0 80.2 l6 3.5 M242.0 83.8 l6 -3.5"/></g><circle cx="245.0" cy="82.0" r="1.2" fill="#d2a81e"/>
<g transform="translate(264.0,64.5)"><path d="M0.5 0.5 H16.5 L21.5 5.5 V15 H0.5 Z" fill="#fff" stroke="#6a6a6a"/><path d="M16.5 0.5 V5.5 H21.5" fill="#eee" stroke="#6a6a6a"/><path d="M13.5 11.5 L22 20.5" stroke="#4a4a4a" stroke-width="4.2" stroke-linecap="round"/><path d="M14 12 L21.8 20.2" stroke="#f0c63a" stroke-width="2.6" stroke-linecap="round"/><path d="M8.2 6.2 a3.6 3.6 0 1 0 5.2 4.6 l1.5 1.8 l-1.6 1.4 l-1.6 -1.9 a3.6 3.6 0 0 1 -4.6 -5.2 l2.3 2.4 l1.5 -1.3 z" fill="#e6e6e6" stroke="#555" stroke-width="0.8"/></g>
<rect x="302.0" y="64.0" width="2" height="2" fill="#adadad"/><rect x="301.0" y="63.0" width="2" height="2" fill="#fbfbfb"/><rect x="305.0" y="67.0" width="2" height="2" fill="#adadad"/><rect x="304.0" y="66.0" width="2" height="2" fill="#fbfbfb"/><rect x="302.0" y="70.0" width="2" height="2" fill="#adadad"/><rect x="301.0" y="69.0" width="2" height="2" fill="#fbfbfb"/><rect x="305.0" y="73.0" width="2" height="2" fill="#adadad"/><rect x="304.0" y="72.0" width="2" height="2" fill="#fbfbfb"/><rect x="302.0" y="76.0" width="2" height="2" fill="#adadad"/><rect x="301.0" y="75.0" width="2" height="2" fill="#fbfbfb"/><rect x="305.0" y="79.0" width="2" height="2" fill="#adadad"/><rect x="304.0" y="78.0" width="2" height="2" fill="#fbfbfb"/><rect x="302.0" y="82.0" width="2" height="2" fill="#adadad"/><rect x="301.0" y="81.0" width="2" height="2" fill="#fbfbfb"/><rect x="305.0" y="85.0" width="2" height="2" fill="#adadad"/><rect x="304.0" y="84.0" width="2" height="2" fill="#fbfbfb"/>
<g transform="translate(313.5,62.5)"><path d="M5.2 13.5 V4.2 a1.4 1.4 0 0 1 2.8 0 V10 V2.2 a1.4 1.4 0 0 1 2.8 0 V10 V3 a1.4 1.4 0 0 1 2.8 0 V10.5 V5.4 a1.4 1.4 0 0 1 2.8 0 V15 Q16.4 19.5 14.5 21 V23 H7.2 V21 Q4.5 18.5 2.2 14.2 Q0.6 11.6 2.4 11 Q4 10.8 5.2 13.5 Z" fill="#fff" stroke="#1a1a1a" stroke-width="1.1" stroke-linejoin="round"/></g>
<g transform="translate(349.0,63.0)"><rect x="0.5" y="0.5" width="16" height="10" fill="#fbe24a" stroke="#333" stroke-width="1" stroke-dasharray="2 1.5"/><g fill="#5b8ed0" stroke="#3b6aa8" stroke-width="0.6"><path d="M11.5 1.5 l4 4.5 h-2.5 v3 h-3 v-3 h-2.5z"/><path d="M11.5 23 l4 -4.5 h-2.5 v-3 h-3 v3 h-2.5z"/><path d="M0.8 12.2 l4.5 -4 v2.5 h3 v3 h-3 v2.5z"/><path d="M22.6 12.2 l-4.5 -4 v2.5 h-3 v3 h3 v2.5z"/></g></g>
<rect x="382.5" y="57" width="33.5" height="35" fill="url(#pressed)"/><rect x="382" y="57" width="1" height="35" fill="#8f8f8f"/><rect x="416" y="57" width="1" height="35" fill="#aaa"/>
<g transform="translate(400.8,72.3)"><path d="M-5.5 6 l-6.5 6.5" stroke="#2a2a2a" stroke-width="3.6" stroke-linecap="round"/><path d="M-6.2 6.8 l-5.6 5.6" stroke="#f2cb3c" stroke-width="2.2" stroke-linecap="round"/><path d="M-4.7 5.4 l-1.6 1.6" stroke="#222" stroke-width="3.4"/><circle cx="0" cy="0" r="8" fill="rgba(246,246,246,0.86)" stroke="#8f8f8f" stroke-width="1.4"/><path d="M-5.5 -2 a6 6 0 0 1 9 -3.5" stroke="#fff" stroke-width="1.6" fill="none" opacity="0.9"/><path d="M-4.5 0 h9 M0 -4.5 v9" stroke="#3c74c4" stroke-width="2.4"/></g>
<g transform="translate(439.5,72.3)"><path d="M-5.5 6 l-6.5 6.5" stroke="#2a2a2a" stroke-width="3.6" stroke-linecap="round"/><path d="M-6.2 6.8 l-5.6 5.6" stroke="#f2cb3c" stroke-width="2.2" stroke-linecap="round"/><path d="M-4.7 5.4 l-1.6 1.6" stroke="#222" stroke-width="3.4"/><circle cx="0" cy="0" r="8" fill="rgba(246,246,246,0.86)" stroke="#8f8f8f" stroke-width="1.4"/><path d="M-5.5 -2 a6 6 0 0 1 9 -3.5" stroke="#fff" stroke-width="1.6" fill="none" opacity="0.9"/><path d="M-4.5 0 h9" stroke="#3c74c4" stroke-width="2.4"/></g>
<g transform="translate(477.4,72.3)" opacity="0.55"><path d="M-5.5 6 l-6.5 6.5" stroke="#2a2a2a" stroke-width="3.6" stroke-linecap="round"/><path d="M-6.2 6.8 l-5.6 5.6" stroke="#f2cb3c" stroke-width="2.2" stroke-linecap="round"/><path d="M-4.7 5.4 l-1.6 1.6" stroke="#222" stroke-width="3.4"/><circle cx="0" cy="0" r="8" fill="rgba(246,246,246,0.86)" stroke="#8f8f8f" stroke-width="1.4"/><path d="M-5.5 -2 a6 6 0 0 1 9 -3.5" stroke="#fff" stroke-width="1.6" fill="none" opacity="0.9"/><text x="0" y="3.4" text-anchor="middle" font-family="Liberation Sans, sans-serif" font-weight="bold" font-size="9.5" fill="#888">1:1</text></g>
<g transform="translate(514.7,73.0)"><g fill="#5b8ed0" stroke="#3b6aa8" stroke-width="0.5"><path d="M-10 -10 h6.5 l-2.2 2.2 l3 3 l-2.1 2.1 l-3 -3 l-2.2 2.2z"/><path d="M10 -10 v6.5 l-2.2 -2.2 l-3 3 l-2.1 -2.1 l3 -3 l-2.2 -2.2z"/><path d="M10 10 h-6.5 l2.2 -2.2 l-3 -3 l2.1 -2.1 l3 3 l2.2 -2.2z"/></g><path d="M-5.5 6 l-6.5 6.5" stroke="#2a2a2a" stroke-width="3.6" stroke-linecap="round"/><path d="M-6.2 6.8 l-5.6 5.6" stroke="#f2cb3c" stroke-width="2.2" stroke-linecap="round"/><path d="M-4.7 5.4 l-1.6 1.6" stroke="#222" stroke-width="3.4"/><circle cx="0" cy="0" r="8" fill="rgba(246,246,246,0.86)" stroke="#8f8f8f" stroke-width="1.4"/><path d="M-5.5 -2 a6 6 0 0 1 9 -3.5" stroke="#fff" stroke-width="1.6" fill="none" opacity="0.9"/></g>
<g transform="translate(553.1,72.0)"><rect x="-12" y="-7.5" width="14" height="13" fill="#fbe24a" stroke="#333" stroke-dasharray="2 1.5"/><path d="M-5.5 6 l-6.5 6.5" stroke="#2a2a2a" stroke-width="3.6" stroke-linecap="round"/><path d="M-6.2 6.8 l-5.6 5.6" stroke="#f2cb3c" stroke-width="2.2" stroke-linecap="round"/><path d="M-4.7 5.4 l-1.6 1.6" stroke="#222" stroke-width="3.4"/><circle cx="0" cy="0" r="8" fill="rgba(246,246,246,0.86)" stroke="#8f8f8f" stroke-width="1.4"/><path d="M-5.5 -2 a6 6 0 0 1 9 -3.5" stroke="#fff" stroke-width="1.6" fill="none" opacity="0.9"/></g>
<g transform="translate(591.8,72.0)"><rect x="-10.5" y="-5" width="17" height="14" fill="#d9d3d9" stroke="#8a7f8a"/><path d="M-5.5 6 l-6.5 6.5" stroke="#2a2a2a" stroke-width="3.6" stroke-linecap="round"/><path d="M-6.2 6.8 l-5.6 5.6" stroke="#f2cb3c" stroke-width="2.2" stroke-linecap="round"/><path d="M-4.7 5.4 l-1.6 1.6" stroke="#222" stroke-width="3.4"/><circle cx="0" cy="0" r="8" fill="rgba(246,246,246,0.86)" stroke="#8f8f8f" stroke-width="1.4"/><path d="M-5.5 -2 a6 6 0 0 1 9 -3.5" stroke="#fff" stroke-width="1.6" fill="none" opacity="0.9"/></g>
<g transform="translate(627.7,72.3)"><path d="M-5.5 6 l-6.5 6.5" stroke="#2a2a2a" stroke-width="3.6" stroke-linecap="round"/><path d="M-6.2 6.8 l-5.6 5.6" stroke="#f2cb3c" stroke-width="2.2" stroke-linecap="round"/><path d="M-4.7 5.4 l-1.6 1.6" stroke="#222" stroke-width="3.4"/><circle cx="0" cy="0" r="8" fill="rgba(246,246,246,0.86)" stroke="#8f8f8f" stroke-width="1.4"/><path d="M-5.5 -2 a6 6 0 0 1 9 -3.5" stroke="#fff" stroke-width="1.6" fill="none" opacity="0.9"/></g>
<rect x="629" y="76.5" width="10" height="10" fill="#4d82c8" stroke="#3b6aa8" stroke-width="0.6"/><path d="M636.5 78.5 l-4.5 3 l4.5 3" stroke="#fff" stroke-width="1.8" fill="none"/>
<g transform="translate(665.5,72.3)" opacity="0.5"><path d="M-5.5 6 l-6.5 6.5" stroke="#2a2a2a" stroke-width="3.6" stroke-linecap="round"/><path d="M-6.2 6.8 l-5.6 5.6" stroke="#f2cb3c" stroke-width="2.2" stroke-linecap="round"/><path d="M-4.7 5.4 l-1.6 1.6" stroke="#222" stroke-width="3.4"/><circle cx="0" cy="0" r="8" fill="rgba(246,246,246,0.86)" stroke="#8f8f8f" stroke-width="1.4"/><path d="M-5.5 -2 a6 6 0 0 1 9 -3.5" stroke="#fff" stroke-width="1.6" fill="none" opacity="0.9"/></g>
<g opacity="0.55"><rect x="667" y="76.5" width="10" height="10" fill="#4d82c8" stroke="#3b6aa8" stroke-width="0.6"/><path d="M669.5 78.5 l4.5 3 l-4.5 3" stroke="#fff" stroke-width="1.8" fill="none"/></g>
<g transform="translate(692.0,63.0)"><g fill="#4f86cf" stroke="#3568ad" stroke-width="0.5"><path d="M1.5 10.5 A9 9 0 0 1 17.5 5.5 L20.5 2.5 V11 H12 L14.8 8.2 A5.2 5.2 0 0 0 5.5 10.5 Z"/><path d="M20.5 12.5 A9 9 0 0 1 4.5 17.5 L1.5 20.5 V12 H10 L7.2 14.8 A5.2 5.2 0 0 0 16.5 12.5 Z"/></g></g>
<rect x="728.0" y="64.0" width="2" height="2" fill="#adadad"/><rect x="727.0" y="63.0" width="2" height="2" fill="#fbfbfb"/><rect x="731.0" y="67.0" width="2" height="2" fill="#adadad"/><rect x="730.0" y="66.0" width="2" height="2" fill="#fbfbfb"/><rect x="728.0" y="70.0" width="2" height="2" fill="#adadad"/><rect x="727.0" y="69.0" width="2" height="2" fill="#fbfbfb"/><rect x="731.0" y="73.0" width="2" height="2" fill="#adadad"/><rect x="730.0" y="72.0" width="2" height="2" fill="#fbfbfb"/><rect x="728.0" y="76.0" width="2" height="2" fill="#adadad"/><rect x="727.0" y="75.0" width="2" height="2" fill="#fbfbfb"/><rect x="731.0" y="79.0" width="2" height="2" fill="#adadad"/><rect x="730.0" y="78.0" width="2" height="2" fill="#fbfbfb"/><rect x="728.0" y="82.0" width="2" height="2" fill="#adadad"/><rect x="727.0" y="81.0" width="2" height="2" fill="#fbfbfb"/><rect x="731.0" y="85.0" width="2" height="2" fill="#adadad"/><rect x="730.0" y="84.0" width="2" height="2" fill="#fbfbfb"/>
<g transform="translate(738.0,63.0)"><circle cx="8.5" cy="9" r="8" fill="#4f86cf" stroke="#3568ad" stroke-width="0.8"/><text x="8.2" y="13.8" text-anchor="middle" font-family="Liberation Serif, serif" font-style="italic" font-weight="bold" font-size="14" fill="#fff">i</text><path transform="translate(11.5,9.0) scale(0.85)" d="M0 0 V14 L3.4 10.8 L5.8 16 L8 15 L5.6 10 H10 Z" fill="#fff" stroke="#222" stroke-width="1"/></g>
<g transform="translate(782.0,63.0)"><g opacity="0.5"><circle cx="9.5" cy="9.5" r="7.6" fill="#e9e9e9" stroke="#8a8a8a" stroke-width="2.2" stroke-dasharray="3 1.6"/><circle cx="9.5" cy="9.5" r="5" fill="#9db9dd" stroke="#777" stroke-width="0.8"/><path d="M8 6.8 v5.4 l4.4 -2.7z" fill="#fff"/><path transform="translate(12.5,10.5) scale(0.80)" d="M0 0 V14 L3.4 10.8 L5.8 16 L8 15 L5.6 10 H10 Z" fill="#fff" stroke="#222" stroke-width="1"/></g></g>
<path d="M808.0 78.5 h8 l-4 5z" fill="#5c5c5c"/>
<g transform="translate(832.0,63.0)"><rect x="0.5" y="0.5" width="12" height="12" fill="#fbe24a" stroke="#c8aa25"/><rect x="16.5" y="0.5" width="6" height="12" fill="#ececec" stroke="#8a8a8a"/><rect x="0.5" y="16.5" width="12" height="6" fill="#ececec" stroke="#8a8a8a"/><path transform="translate(8.0,7.5) scale(0.95)" d="M0 0 V14 L3.4 10.8 L5.8 16 L8 15 L5.6 10 H10 Z" fill="#fff" stroke="#222" stroke-width="1"/></g>
<path d="M858.0 78.5 h8 l-4 5z" fill="#5c5c5c"/>
<g transform="translate(879.0,66.0)"><rect x="0.5" y="0.5" width="14" height="14" fill="#fbe24a" stroke="#b89b1c" stroke-dasharray="2 1.4"/><rect x="10.5" y="10.5" width="10" height="10" rx="2" fill="#e0222e" stroke="#b3101b" stroke-width="0.8"/><circle cx="15.5" cy="15.5" r="3" fill="none" stroke="#fff" stroke-width="1.3"/><path d="M13.4 17.6 l4.2 -4.2" stroke="#fff" stroke-width="1.3"/></g>
<g transform="translate(916.0,62.0)"><text x="0" y="17" font-family="Liberation Serif, serif" font-size="26" fill="#5b2d6e">ε</text><rect x="9.5" y="12.5" width="12" height="12" fill="#fbe24a" stroke="#b89b1c" stroke-dasharray="2 1.4"/></g>
<g transform="translate(954.0,65.0)"><rect x="0.5" y="0.5" width="19" height="19" fill="#fff" stroke="#2d5e93" stroke-width="1.2"/><rect x="1.5" y="1.5" width="17" height="4" fill="#cfe5f8"/><path d="M3 3.5 h4 M9.5 3.5 h8" stroke="#2d5e93" stroke-width="1.6"/><path d="M2.5 8 h5 M9.5 8 h8 M2.5 11 h5 M9.5 11 h8 M2.5 14 h5 M9.5 14 h8 M2.5 17 h5 M9.5 17 h8" stroke="#2d5e93" stroke-width="1.5"/></g>
<g transform="translate(991.0,63.0)"><g opacity="0.75"><path d="M1.5 0 V22 M20.5 0 V22 M0 22.5 H22" stroke="#8a8a8a" stroke-width="1.4"/><path d="M1.5 3.5 H20.5 M1.5 10.5 H20.5 M1.5 17.5 H20.5" stroke="#999" stroke-width="1"/><g stroke-width="1" fill="#f3e3e3" stroke="#d05a5a"><circle cx="10" cy="3.5" r="2.4"/><circle cx="16" cy="3.5" r="2.4"/></g><g stroke-width="1" fill="#dff0df" stroke="#6aaa6a"><circle cx="5" cy="10.5" r="2.4"/><circle cx="11" cy="10.5" r="2.4"/></g><g stroke-width="1" fill="#dde8f5" stroke="#6a95c6"><circle cx="5" cy="17.5" r="2.4"/><circle cx="16" cy="17.5" r="2.4"/></g></g></g>
<g transform="translate(1034.0,66.0)"><path d="M2 4 H21 M2 1.2 V6.8 M21 1.2 V6.8" stroke="#2b5d86" stroke-width="1.5"/><rect x="0.5" y="10.5" width="21" height="6.5" fill="#e3e6d8" stroke="#6f6f6f"/><path d="M3 11 v3 M5.5 11 v2 M8 11 v3 M10.5 11 v2 M13 11 v3 M15.5 11 v2 M18 11 v3" stroke="#555" stroke-width="0.8"/></g>
<path d="M1060.0 78.5 h8 l-4 5z" fill="#5c5c5c"/>
<g transform="translate(1080.0,64.0)"><path d="M3.5 0.8 H16.5 Q19.5 0.8 19.5 3.8 V10 Q19.5 13 16.5 13 H11 L5.5 18 L7 13 H3.5 Q0.5 13 0.5 10 V3.8 Q0.5 0.8 3.5 0.8 Z" fill="#fbe26a" stroke="#d9b531" stroke-width="1.2" stroke-linejoin="round"/><path d="M3 3.5 Q3 2.6 4 2.6 H12" stroke="#fff3b0" stroke-width="1.4" fill="none"/></g>
<g transform="translate(1118.0,65.0)"><rect x="1" y="4" width="16" height="11" fill="none" stroke="#444" stroke-width="1.2" stroke-dasharray="1.2 1.4"/><path d="M11 3.8 V1.5 Q13 -0.5 15 1.5 V3.8Z" fill="#f4d23a" stroke="#c9a61d" stroke-width="0.8"/></g>
<rect x="1126.5" y="76.5" width="10" height="10" rx="2" fill="#d2a81e" stroke="#d2a81e" stroke-width="0.8"/><g stroke="#fff" stroke-width="1.7"><path d="M1131.5 78.0 v7 M1128.5 79.8 l6 3.5 M1128.5 83.2 l6 -3.5"/></g><circle cx="1131.5" cy="81.5" r="1.2" fill="#d2a81e"/>
<g transform="translate(1157.0,65.0)"><rect x="1" y="4" width="16" height="11" fill="none" stroke="#444" stroke-width="1.2" stroke-dasharray="1.2 1.4"/><path d="M10 3.8 V1.5 Q12 -0.5 14 1.5 V3.8Z" fill="#f4d23a" stroke="#c9a61d" stroke-width="0.8"/></g>
<g transform="translate(1200.0,64.5)"><path d="M4.5 0.5 H21.5 V15.5 H8 L1 20 L4.5 14 Z" fill="#dde8f1" stroke="#8a8a8a" stroke-linejoin="round"/><text x="13" y="12.8" text-anchor="middle" font-family="Liberation Serif, serif" font-size="14" fill="#333">T</text></g>
<path d="M1224.0 78.5 h8 l-4 5z" fill="#5c5c5c"/>
<rect x="1241.0" y="64.0" width="2" height="2" fill="#adadad"/><rect x="1240.0" y="63.0" width="2" height="2" fill="#fbfbfb"/><rect x="1244.0" y="67.0" width="2" height="2" fill="#adadad"/><rect x="1243.0" y="66.0" width="2" height="2" fill="#fbfbfb"/><rect x="1241.0" y="70.0" width="2" height="2" fill="#adadad"/><rect x="1240.0" y="69.0" width="2" height="2" fill="#fbfbfb"/><rect x="1244.0" y="73.0" width="2" height="2" fill="#adadad"/><rect x="1243.0" y="72.0" width="2" height="2" fill="#fbfbfb"/><rect x="1241.0" y="76.0" width="2" height="2" fill="#adadad"/><rect x="1240.0" y="75.0" width="2" height="2" fill="#fbfbfb"/><rect x="1244.0" y="79.0" width="2" height="2" fill="#adadad"/><rect x="1243.0" y="78.0" width="2" height="2" fill="#fbfbfb"/><rect x="1241.0" y="82.0" width="2" height="2" fill="#adadad"/><rect x="1240.0" y="81.0" width="2" height="2" fill="#fbfbfb"/><rect x="1244.0" y="85.0" width="2" height="2" fill="#adadad"/><rect x="1243.0" y="84.0" width="2" height="2" fill="#fbfbfb"/>
<g transform="translate(1252.5,64.0)"><rect x="0.5" y="0.5" width="19" height="20.5" rx="1" fill="#5f8fce" stroke="#1f2f45"/><rect x="0.5" y="0.5" width="4.5" height="20.5" fill="#23344d"/><text x="12.3" y="15.5" text-anchor="middle" font-family="Liberation Sans, sans-serif" font-size="14" fill="#fff">?</text></g>
<g transform="translate(1289.0,64.0)"><path transform="translate(0.5,0.5) scale(1.00)" d="M0 0 V14 L3.4 10.8 L5.8 16 L8 15 L5.6 10 H10 Z" fill="#fff" stroke="#222" stroke-width="1"/><text x="17.5" y="20" text-anchor="middle" font-family="Liberation Sans, sans-serif" font-size="19" fill="#111">?</text></g>
<rect x="65.0" y="100.0" width="2" height="2" fill="#adadad"/><rect x="64.0" y="99.0" width="2" height="2" fill="#fbfbfb"/><rect x="68.0" y="103.0" width="2" height="2" fill="#adadad"/><rect x="67.0" y="102.0" width="2" height="2" fill="#fbfbfb"/><rect x="65.0" y="106.0" width="2" height="2" fill="#adadad"/><rect x="64.0" y="105.0" width="2" height="2" fill="#fbfbfb"/><rect x="68.0" y="109.0" width="2" height="2" fill="#adadad"/><rect x="67.0" y="108.0" width="2" height="2" fill="#fbfbfb"/><rect x="65.0" y="112.0" width="2" height="2" fill="#adadad"/><rect x="64.0" y="111.0" width="2" height="2" fill="#fbfbfb"/><rect x="68.0" y="115.0" width="2" height="2" fill="#adadad"/><rect x="67.0" y="114.0" width="2" height="2" fill="#fbfbfb"/><rect x="65.0" y="118.0" width="2" height="2" fill="#adadad"/><rect x="64.0" y="117.0" width="2" height="2" fill="#fbfbfb"/><rect x="68.0" y="121.0" width="2" height="2" fill="#adadad"/><rect x="67.0" y="120.0" width="2" height="2" fill="#fbfbfb"/>
<g opacity="0.6"><g transform="translate(87.0,101.5) scale(1.00) rotate(28)"><rect x="-3" y="0" width="6" height="16" fill="#e9a07a" stroke="#7a6a3a" stroke-width="0.5"/><rect x="-1" y="0" width="2" height="16" fill="#f3c08a"/><rect x="-3" y="-2.2" width="6" height="2.4" fill="#e9e3e3" stroke="#999" stroke-width="0.4"/><path d="M-3 16 L0 23 L3 16Z" fill="#e6e0d6" stroke="#888" stroke-width="0.5"/><path d="M-1 20.6 L0 23 L1 20.6Z" fill="#333"/></g></g>
<g opacity="0.85"><g transform="translate(92.0,101.5) scale(1.00) rotate(28)"><rect x="-3" y="0" width="6" height="16" fill="#e9935f" stroke="#7a6a3a" stroke-width="0.5"/><rect x="-1" y="0" width="2" height="16" fill="#f5c27a"/><rect x="-3" y="-2.2" width="6" height="2.4" fill="#e9e3e3" stroke="#999" stroke-width="0.4"/><path d="M-3 16 L0 23 L3 16Z" fill="#e6e0d6" stroke="#888" stroke-width="0.5"/><path d="M-1 20.6 L0 23 L1 20.6Z" fill="#333"/></g></g>
<path d="M93.0 117.0 h8 l-4 5z" fill="#5c5c5c"/>
<g transform="translate(129.5,100.5) scale(1.00) rotate(28)"><rect x="-3" y="0" width="6" height="16" fill="#f1d61f" stroke="#7a6a3a" stroke-width="0.5"/><rect x="-1" y="0" width="2" height="16" fill="#fbf07a"/><rect x="-3" y="-2.2" width="6" height="2.4" fill="#e9e3e3" stroke="#999" stroke-width="0.4"/><path d="M-3 16 L0 23 L3 16Z" fill="#e6e0d6" stroke="#888" stroke-width="0.5"/><path d="M-1 20.6 L0 23 L1 20.6Z" fill="#333"/></g>
<g opacity="0.45">
<g transform="translate(151.5,99.5)"><rect x="0.5" y="0.5" width="20" height="21" rx="2" fill="#6c97d0" stroke="#3c68a5"/><rect x="3.5" y="1" width="14" height="9" fill="#f4f4f4" stroke="#b9c6d8" stroke-width="0.6"/><path d="M5 3.2h11 M5 5.4h11 M5 7.6h11" stroke="#555" stroke-width="1"/><rect x="4.5" y="13.5" width="12" height="7" fill="#eef1f6" stroke="#3c68a5" stroke-width="0.6"/><rect x="6.5" y="14.8" width="2.6" height="5" fill="#27457a"/></g>
</g>
<g opacity="0.8"><g transform="translate(170.0,107.0) scale(0.72) rotate(28)"><rect x="-3" y="0" width="6" height="16" fill="#e9935f" stroke="#7a6a3a" stroke-width="0.5"/><rect x="-1" y="0" width="2" height="16" fill="#f5c27a"/><rect x="-3" y="-2.2" width="6" height="2.4" fill="#e9e3e3" stroke="#999" stroke-width="0.4"/><path d="M-3 16 L0 23 L3 16Z" fill="#e6e0d6" stroke="#888" stroke-width="0.5"/><path d="M-1 20.6 L0 23 L1 20.6Z" fill="#333"/></g></g>
<g transform="translate(189.0,99.5)" opacity="0.7"><path d="M1 5.5 Q1.5 0.5 8 0.8 Q11.5 2.2 15 1 Q21.5 0.2 22 5 Q22 10 16.5 10.2 Q12 8.6 9 10.4 Q2 11.2 1 5.5Z" fill="#bfe0c3" stroke="#93a893" stroke-width="1"/></g>
<g opacity="0.65"><rect x="201.3" y="112.3" width="10" height="10" rx="2" fill="#d2a81e" stroke="#d2a81e" stroke-width="0.8"/><g stroke="#fff" stroke-width="1.7"><path d="M206.3 113.8 v7 M203.3 115.5 l6 3.5 M203.3 119.0 l6 -3.5"/></g><circle cx="206.3" cy="117.3" r="1.2" fill="#d2a81e"/></g>
<g transform="translate(227.0,99.5)" opacity="0.7"><path d="M1 5.5 Q1.5 0.5 8 0.8 Q11.5 2.2 15 1 Q21.5 0.2 22 5 Q22 10 16.5 10.2 Q12 8.6 9 10.4 Q2 11.2 1 5.5Z" fill="#bfe0c3" stroke="#93a893" stroke-width="1"/></g>
<g opacity="0.7"><rect x="239.3" y="112.3" width="10" height="10" rx="2" fill="#5b86c4" stroke="#5b86c4" stroke-width="0.8"/><path d="M240.3 115.8 h4 v-2.5 l4 4 l-4 4 v-2.5 h-4z" fill="#fff"/></g>
<g transform="translate(266.0,100.0)"><g opacity="0.75"><path d="M1 17 L8 3 H21" stroke="#777" stroke-width="1" fill="none"/><circle cx="8" cy="3" r="2.3" fill="#bfe0c3" stroke="#7a9a7a" stroke-width="0.8"/><path d="M9 20 L19 9" stroke="#e2b53a" stroke-width="2.4" stroke-linecap="round"/><path d="M10 8.5 L20.5 19.5" stroke="#d39a3a" stroke-width="2.6" stroke-linecap="round"/><path d="M8 10 l3 -3.4 l3 2.6 l-3 3.4z" fill="#8a8a8a"/></g></g>
<g transform="translate(304.5,102.5)"><g opacity="0.85"><rect x="0.5" y="0.5" width="14.5" height="14" fill="#efe08a" stroke="#c4ad3a" stroke-dasharray="2 1.4"/></g></g>
<g opacity="0.9"><rect x="316.0" y="113.0" width="10" height="10" rx="2" fill="#ea5561" stroke="#d23e4a" stroke-width="0.8"/><path d="M318.5 115.5 l5 5 M323.5 115.5 l-5 5" stroke="#fff" stroke-width="1.8"/></g>
<g transform="translate(340.0,102.0)"><g opacity="0.85"><path d="M1 3 L17.5 12.5 M1 13.5 L17.5 5.5" stroke="#8c8c8c" stroke-width="1.6"/><path d="M2 2.6 L12 8.2 M2 13.8 L12 8.8" stroke="#d8d8d8" stroke-width="0.8"/><ellipse cx="20.3" cy="4.2" rx="3.2" ry="2.4" transform="rotate(-25 20.3 4.2)" fill="none" stroke="#d6404a" stroke-width="1.5"/><ellipse cx="20.3" cy="13.6" rx="3.2" ry="2.4" transform="rotate(25 20.3 13.6)" fill="none" stroke="#d6404a" stroke-width="1.5"/></g></g>
<g transform="translate(381.0,102.5)"><g opacity="0.55"><path d="M6.5 0.5 H13.5 L16.5 3.5 V13.5 H6.5Z" fill="#fafafa" stroke="#8a8a8a"/><path d="M0.5 3.5 H8.5 L11.5 6.5 V17.5 H0.5Z" fill="#fafafa" stroke="#8a8a8a"/><path d="M2.5 9 h7 M2.5 11.5 h7 M2.5 14 h7" stroke="#999" stroke-width="0.9"/></g></g>
<g transform="translate(420.0,100.0)"><g opacity="0.6"><rect x="0.5" y="2.5" width="15" height="18" rx="1" fill="#f5e6d6" stroke="#c9966a"/><rect x="4.5" y="0.5" width="7" height="4" rx="1" fill="#e6e6e6" stroke="#999"/><path d="M3 6.5 H10.5 L13 9 V18.5 H3Z" fill="#fdfdfd" stroke="#8a8a8a" stroke-width="0.8"/><path d="M5 11 h6 M5 13.5 h6 M5 16 h6" stroke="#888" stroke-width="0.9"/></g></g>
<rect x="453.0" y="100.0" width="2" height="2" fill="#adadad"/><rect x="452.0" y="99.0" width="2" height="2" fill="#fbfbfb"/><rect x="456.0" y="103.0" width="2" height="2" fill="#adadad"/><rect x="455.0" y="102.0" width="2" height="2" fill="#fbfbfb"/><rect x="453.0" y="106.0" width="2" height="2" fill="#adadad"/><rect x="452.0" y="105.0" width="2" height="2" fill="#fbfbfb"/><rect x="456.0" y="109.0" width="2" height="2" fill="#adadad"/><rect x="455.0" y="108.0" width="2" height="2" fill="#fbfbfb"/><rect x="453.0" y="112.0" width="2" height="2" fill="#adadad"/><rect x="452.0" y="111.0" width="2" height="2" fill="#fbfbfb"/><rect x="456.0" y="115.0" width="2" height="2" fill="#adadad"/><rect x="455.0" y="114.0" width="2" height="2" fill="#fbfbfb"/><rect x="453.0" y="118.0" width="2" height="2" fill="#adadad"/><rect x="452.0" y="117.0" width="2" height="2" fill="#fbfbfb"/><rect x="456.0" y="121.0" width="2" height="2" fill="#adadad"/><rect x="455.0" y="120.0" width="2" height="2" fill="#fbfbfb"/>
<g transform="translate(463.0,103.0)"><path d="M0 5.2 L4.5 0.5 H21.0 V10 H4.5 Z" fill="#f1d232" stroke="#c7a50f" stroke-width="1" stroke-linejoin="round"/><text x="13.2" y="8.4" font-family="Liberation Sans, sans-serif" font-weight="bold" font-size="9" fill="#1c1c1c" text-anchor="middle">abc</text></g>
<rect x="501.5" y="103.5" width="23" height="17.5" fill="#d3e3f7" stroke="#6d9ad8" stroke-width="1"/>
<g transform="translate(503.0,104.5)"><path d="M0 5.2 L4.5 0.5 H17.5 V10 H4.5 Z" fill="#f1d232" stroke="#c7a50f" stroke-width="1" stroke-linejoin="round"/><text x="11.5" y="8.4" font-family="Liberation Sans, sans-serif" font-weight="bold" font-size="9" fill="#1c1c1c" text-anchor="middle">ab</text></g>
<path d="M517 108 v6" stroke="#eee" stroke-width="2.2" stroke-linecap="round"/><circle cx="518.8" cy="116.2" r="3.9" fill="#b71522" stroke="#8a0d18" stroke-width="0.6"/><circle cx="517.6" cy="114.9" r="1.1" fill="#e8707a"/>
<g transform="translate(539.5,104.0)" opacity="0.55"><path d="M0 5.2 L4.5 0.5 H20.0 V10 H4.5 Z" fill="#f1d232" stroke="#c7a50f" stroke-width="1" stroke-linejoin="round"/><text x="12.8" y="8.4" font-family="Liberation Sans, sans-serif" font-weight="bold" font-size="9" fill="#1c1c1c" text-anchor="middle">ab</text></g>
<g opacity="0.6"><path d="M556 108 v6" stroke="#eee" stroke-width="2.2" stroke-linecap="round"/><circle cx="557.5" cy="117" r="4.3" fill="#b9424d" stroke="#9a3640" stroke-width="0.6"/></g>
<g transform="translate(577.3,104.0)" opacity="0.55"><path d="M0 5.2 L4.5 0.5 H21.0 V10 H4.5 Z" fill="#f1d232" stroke="#c7a50f" stroke-width="1" stroke-linejoin="round"/><text x="13.2" y="8.4" font-family="Liberation Sans, sans-serif" font-weight="bold" font-size="9" fill="#1c1c1c" text-anchor="middle">abc</text></g>
<g opacity="0.75"><path d="M585 118 Q592.5 111.5 600 118 Q592.5 123.5 585 118Z" fill="#fff" stroke="#666" stroke-width="0.9"/><circle cx="592.5" cy="117.8" r="2.8" fill="#6d9ad8" stroke="#345" stroke-width="0.6"/><circle cx="592.5" cy="117.8" r="1.1" fill="#123"/></g>
<g transform="translate(615.0,104.0)" opacity="0.55"><path d="M0 5.2 L4.5 0.5 H21.0 V10 H4.5 Z" fill="#f1d232" stroke="#c7a50f" stroke-width="1" stroke-linejoin="round"/><text x="13.2" y="8.4" font-family="Liberation Sans, sans-serif" font-weight="bold" font-size="9" fill="#1c1c1c" text-anchor="middle">abc</text></g>
<g opacity="0.7"><rect x="628.0" y="112.0" width="10" height="10" rx="2" fill="#5b86c4" stroke="#5b86c4" stroke-width="0.8"/><path d="M629.0 115.5 h4 v-2.5 l4 4 l-4 4 v-2.5 h-4z" fill="#fff"/></g>
<g transform="translate(653.0,104.0)" opacity="0.55"><path d="M0 5.2 L4.5 0.5 H21.0 V10 H4.5 Z" fill="#f1d232" stroke="#c7a50f" stroke-width="1" stroke-linejoin="round"/><text x="13.2" y="8.4" font-family="Liberation Sans, sans-serif" font-weight="bold" font-size="9" fill="#1c1c1c" text-anchor="middle">abc</text></g>
<g opacity="0.7"><rect x="666.0" y="112.0" width="10" height="10" rx="2" fill="#5b86c4" stroke="#5b86c4" stroke-width="0.8"/><path d="M668.0 117.5 a3 3 0 1 0 3 -3" stroke="#fff" stroke-width="1.5" fill="none"/><path d="M671.5 115.8 l-2.5 0 l2.5 -2.5z" fill="#fff"/></g>
<g transform="translate(691.0,104.0)" opacity="0.55"><path d="M0 5.2 L4.5 0.5 H21.0 V10 H4.5 Z" fill="#f1d232" stroke="#c7a50f" stroke-width="1" stroke-linejoin="round"/><text x="13.2" y="8.4" font-family="Liberation Sans, sans-serif" font-weight="bold" font-size="9" fill="#1c1c1c" text-anchor="middle">abc</text></g>
<g opacity="0.7"><rect x="704.0" y="112.0" width="10" height="10" rx="2" fill="#e3cf75" stroke="#c9b458" stroke-width="0.8"/><path d="M706.5 119.5 l5 -5" stroke="#fff" stroke-width="2.2" stroke-linecap="round"/></g>
<rect x="729.0" y="100.0" width="2" height="2" fill="#adadad"/><rect x="728.0" y="99.0" width="2" height="2" fill="#fbfbfb"/><rect x="732.0" y="103.0" width="2" height="2" fill="#adadad"/><rect x="731.0" y="102.0" width="2" height="2" fill="#fbfbfb"/><rect x="729.0" y="106.0" width="2" height="2" fill="#adadad"/><rect x="728.0" y="105.0" width="2" height="2" fill="#fbfbfb"/><rect x="732.0" y="109.0" width="2" height="2" fill="#adadad"/><rect x="731.0" y="108.0" width="2" height="2" fill="#fbfbfb"/><rect x="729.0" y="112.0" width="2" height="2" fill="#adadad"/><rect x="728.0" y="111.0" width="2" height="2" fill="#fbfbfb"/><rect x="732.0" y="115.0" width="2" height="2" fill="#adadad"/><rect x="731.0" y="114.0" width="2" height="2" fill="#fbfbfb"/><rect x="729.0" y="118.0" width="2" height="2" fill="#adadad"/><rect x="728.0" y="117.0" width="2" height="2" fill="#fbfbfb"/><rect x="732.0" y="121.0" width="2" height="2" fill="#adadad"/><rect x="731.0" y="120.0" width="2" height="2" fill="#fbfbfb"/>
<rect x="742.0" y="100.0" width="2" height="2" fill="#adadad"/><rect x="741.0" y="99.0" width="2" height="2" fill="#fbfbfb"/><rect x="745.0" y="103.0" width="2" height="2" fill="#adadad"/><rect x="744.0" y="102.0" width="2" height="2" fill="#fbfbfb"/><rect x="742.0" y="106.0" width="2" height="2" fill="#adadad"/><rect x="741.0" y="105.0" width="2" height="2" fill="#fbfbfb"/><rect x="745.0" y="109.0" width="2" height="2" fill="#adadad"/><rect x="744.0" y="108.0" width="2" height="2" fill="#fbfbfb"/><rect x="742.0" y="112.0" width="2" height="2" fill="#adadad"/><rect x="741.0" y="111.0" width="2" height="2" fill="#fbfbfb"/><rect x="745.0" y="115.0" width="2" height="2" fill="#adadad"/><rect x="744.0" y="114.0" width="2" height="2" fill="#fbfbfb"/><rect x="742.0" y="118.0" width="2" height="2" fill="#adadad"/><rect x="741.0" y="117.0" width="2" height="2" fill="#fbfbfb"/><rect x="745.0" y="121.0" width="2" height="2" fill="#adadad"/><rect x="744.0" y="120.0" width="2" height="2" fill="#fbfbfb"/>
<rect x="66.0" y="137.5" width="2" height="2" fill="#adadad"/><rect x="65.0" y="136.5" width="2" height="2" fill="#fbfbfb"/><rect x="69.0" y="140.5" width="2" height="2" fill="#adadad"/><rect x="68.0" y="139.5" width="2" height="2" fill="#fbfbfb"/><rect x="72.0" y="137.5" width="2" height="2" fill="#adadad"/><rect x="71.0" y="136.5" width="2" height="2" fill="#fbfbfb"/><rect x="75.0" y="140.5" width="2" height="2" fill="#adadad"/><rect x="74.0" y="139.5" width="2" height="2" fill="#fbfbfb"/><rect x="78.0" y="137.5" width="2" height="2" fill="#adadad"/><rect x="77.0" y="136.5" width="2" height="2" fill="#fbfbfb"/><rect x="81.0" y="140.5" width="2" height="2" fill="#adadad"/><rect x="80.0" y="139.5" width="2" height="2" fill="#fbfbfb"/><rect x="84.0" y="137.5" width="2" height="2" fill="#adadad"/><rect x="83.0" y="136.5" width="2" height="2" fill="#fbfbfb"/><rect x="87.0" y="140.5" width="2" height="2" fill="#adadad"/><rect x="86.0" y="139.5" width="2" height="2" fill="#fbfbfb"/><rect x="90.0" y="137.5" width="2" height="2" fill="#adadad"/><rect x="89.0" y="136.5" width="2" height="2" fill="#fbfbfb"/><rect x="93.0" y="140.5" width="2" height="2" fill="#adadad"/><rect x="92.0" y="139.5" width="2" height="2" fill="#fbfbfb"/><rect x="96.0" y="137.5" width="2" height="2" fill="#adadad"/><rect x="95.0" y="136.5" width="2" height="2" fill="#fbfbfb"/><rect x="99.0" y="140.5" width="2" height="2" fill="#adadad"/><rect x="98.0" y="139.5" width="2" height="2" fill="#fbfbfb"/>
<g transform="translate(68.5,145.0)"><path d="M3 3.2 L9.2 17.5 L16 4.5 L22.5 3.2" fill="none" stroke="#2d5e86" stroke-width="1.3"/><g fill="#fff" stroke="#2d5e86" stroke-width="1.2"><circle cx="3" cy="3.2" r="2"/><circle cx="22.5" cy="3.2" r="2"/><circle cx="16.5" cy="3.8" r="1.6"/><circle cx="9.2" cy="17.5" r="2"/></g></g>
<rect x="83.0" y="160.5" width="10" height="10" rx="2" fill="#5a9a5a" stroke="#5a9a5a" stroke-width="0.8"/><path d="M85.0 165.5 h6 M88.0 162.5 v6" stroke="#fff" stroke-width="2.2"/>
<g transform="translate(69.0,184.0)"><rect x="0.0" y="0.0" width="6.6" height="6.6" fill="#1f3b60"/><rect x="6.6" y="0.0" width="6.6" height="6.6" fill="#6c9bd2"/><rect x="13.2" y="0.0" width="6.6" height="6.6" fill="#1f3b60"/><rect x="0.0" y="6.6" width="6.6" height="6.6" fill="#6c9bd2"/><rect x="6.6" y="6.6" width="6.6" height="6.6" fill="#1f3b60"/><rect x="13.2" y="6.6" width="6.6" height="6.6" fill="#6c9bd2"/><rect x="0.0" y="13.2" width="6.6" height="6.6" fill="#1f3b60"/><rect x="6.6" y="13.2" width="6.6" height="6.6" fill="#6c9bd2"/><rect x="13.2" y="13.2" width="6.6" height="6.6" fill="#8db3de"/></g>
<rect x="84.0" y="198.0" width="10" height="10" rx="2" fill="#5a9a5a" stroke="#5a9a5a" stroke-width="0.8"/><path d="M86.0 203.0 h6 M89.0 200.0 v6" stroke="#fff" stroke-width="2.2"/>
<g transform="translate(68.5,221.5)"><path d="M3 2.5 Q9 -1 15 1.5 Q19.5 3.5 18.5 9 Q18 12 16.5 13.5 L17.5 16 H14.5 L13.5 13.8 Q12.5 14.6 12 17.5 Q11 19.5 9 18 L9.5 13 Q4 13.5 2 9.5 Q0.5 5.5 3 2.5Z" fill="#5b8cc8" stroke="#1f3b60" stroke-width="1.2" stroke-linejoin="round"/><path d="M8.5 3.5 Q6.5 8 9.5 12.5 M12.5 3 Q14.5 7.5 13 12" fill="none" stroke="#1f3b60" stroke-width="0.9"/><circle cx="14" cy="5.8" r="0.8" fill="#fff"/></g>
<rect x="84.0" y="236.5" width="10" height="10" rx="2" fill="#5a9a5a" stroke="#5a9a5a" stroke-width="0.8"/><path d="M86.0 241.5 h6 M89.0 238.5 v6" stroke="#fff" stroke-width="2.2"/>
<g transform="translate(68.5,260.0)"><path d="M1 23 Q3 14 9 8 Q15 2.5 23.5 0.5 Q23.5 8 18 13 Q12.5 17.5 6.5 17 Q3.5 19.5 1 23Z" fill="#7fa9da" stroke="#2d4f7a" stroke-width="1" stroke-linejoin="round"/><path d="M2 21.5 Q8 12 21.5 2.5" fill="none" stroke="#2d4f7a" stroke-width="0.9"/><path d="M9 14.5 Q12 9 17 6 M7 16.5 Q9.5 10.5 14 7 M11.5 15.5 Q15 11.5 19.5 8.5" fill="none" stroke="#dfeaf7" stroke-width="0.7"/></g>
<rect x="84.0" y="274.5" width="10" height="10" rx="2" fill="#5a9a5a" stroke="#5a9a5a" stroke-width="0.8"/><path d="M86.0 279.5 h6 M89.0 276.5 v6" stroke="#fff" stroke-width="2.2"/>
<g transform="translate(68.5,298.0)"><path d="M1 1 Q14 2 23.5 11 Q13 14 1 21.5 Q7.5 11 1 1Z" fill="#6c9bd2" stroke="#1f3b60" stroke-width="1.1" stroke-linejoin="round"/><path d="M6.5 3 Q11 10 7 17.5 M12 5 Q16 10.5 13 14.5 M17.5 7.5 Q20 10.5 18.5 12.5" fill="none" stroke="#1f3b60" stroke-width="0.9"/></g>
<rect x="84.0" y="312.5" width="10" height="10" rx="2" fill="#5a9a5a" stroke="#5a9a5a" stroke-width="0.8"/><path d="M86.0 317.5 h6 M89.0 314.5 v6" stroke="#fff" stroke-width="2.2"/>
<g transform="translate(68.5,335.0)"><ellipse cx="12.3" cy="11" rx="11.6" ry="10.2" fill="#d5e4f6" stroke="#5b8cc8" stroke-width="1.2"/><path d="M1 11 H23.6 M2.5 6 H22 M2.5 16 H22 M12.3 1 V21 M6.5 2.5 Q3.5 11 6.5 19.5 M18 2.5 Q21 11 18 19.5" fill="none" stroke="#fff" stroke-width="0.9"/><path d="M4 5 l4 -1 l2 2 l-3 3 l-3 -1z M12 5 l5 -1 l3 3 l-2 2 l-4 -1z M7 11 l3 0 l1 5 l-3 1z M14 11 l4 0 l-1 5 l-2 1z" fill="#2d4f7a" opacity="0.85"/></g>
<rect x="84.0" y="350.5" width="10" height="10" rx="2" fill="#5a9a5a" stroke="#5a9a5a" stroke-width="0.8"/><path d="M86.0 355.5 h6 M89.0 352.5 v6" stroke="#fff" stroke-width="2.2"/>
<g transform="translate(68.5,373.0)"><ellipse cx="12.3" cy="11" rx="11.6" ry="10.2" fill="#6c9bd2" stroke="#16263f" stroke-width="1.2"/><path d="M1.5 7 H23 V10.5 H1 Z M1.5 14.5 H23 L22 18 H2.5 Z" fill="#1f3b60"/><ellipse cx="12.3" cy="11" rx="5" ry="10.2" fill="none" stroke="#16263f" stroke-width="1.1"/><path d="M12.3 1 V21" stroke="#16263f" stroke-width="0.8"/><path d="M2 4.8 H22.5" stroke="#fff" stroke-width="1"/><path d="M1 12.5 H23.6" stroke="#fff" stroke-width="1.4"/></g>
<rect x="84.0" y="389.0" width="10" height="10" rx="2" fill="#5a9a5a" stroke="#5a9a5a" stroke-width="0.8"/><path d="M86.0 394.0 h6 M89.0 391.0 v6" stroke="#fff" stroke-width="2.2"/>
<g transform="translate(68.5,411.5)"><ellipse cx="12.3" cy="11" rx="11.6" ry="10.2" fill="#eef4fb" stroke="#6c9bd2" stroke-width="1.2"/><path d="M1 11 H23.6 M2.5 6 H22 M2.5 16 H22 M12.3 1 V21 M6.5 2.5 Q3.5 11 6.5 19.5 M18 2.5 Q21 11 18 19.5" fill="none" stroke="#8fb2de" stroke-width="0.8"/><path d="M5 5.5 L10 17 L15 6.5 L19.5 5.5" fill="none" stroke="#222" stroke-width="1.1"/><g fill="#fff" stroke="#222" stroke-width="0.9"><circle cx="5" cy="5.5" r="1.5"/><circle cx="19.5" cy="5.5" r="1.5"/><circle cx="15.2" cy="6" r="1.2"/><circle cx="10" cy="17" r="1.5"/></g></g>
<rect x="84.0" y="426.5" width="10" height="10" rx="2" fill="#5a9a5a" stroke="#5a9a5a" stroke-width="0.8"/><path d="M86.0 431.5 h6 M89.0 428.5 v6" stroke="#fff" stroke-width="2.2"/>
<g transform="translate(68.5,450.0)"><path d="M6.5 3.5 Q9.5 0.5 13 3.5 Q17 8.5 12.5 14 Q9.5 17.5 5.5 18.5 L5 17 Q9.5 14.5 9.8 10 Q6.5 10.5 5.5 7.5 Q5 5 6.5 3.5Z" fill="#5b8cc8" stroke="#2d4f7a" stroke-width="0.9"/></g>
<rect x="84.0" y="465.0" width="10" height="10" rx="2" fill="#5a9a5a" stroke="#5a9a5a" stroke-width="0.8"/><path d="M86.0 470.0 h6 M89.0 467.0 v6" stroke="#fff" stroke-width="2.2"/>
<g transform="translate(68.5,488.5)"><path d="M1 23 Q3 14 9 8 Q15 2.5 23.5 0.5 Q23.5 8 18 13 Q12.5 17.5 6.5 17 Q3.5 19.5 1 23Z" fill="#7fa9da" stroke="#2d4f7a" stroke-width="1" stroke-linejoin="round"/><path d="M2 21.5 Q8 12 21.5 2.5" fill="none" stroke="#2d4f7a" stroke-width="0.9"/><path d="M9 14.5 Q12 9 17 6 M7 16.5 Q9.5 10.5 14 7 M11.5 15.5 Q15 11.5 19.5 8.5" fill="none" stroke="#dfeaf7" stroke-width="0.7"/></g>
<rect x="84.0" y="503.0" width="10" height="10" rx="2" fill="#d2a81e" stroke="#d2a81e" stroke-width="0.8"/><g stroke="#fff" stroke-width="1.7"><path d="M89.0 504.5 v7 M86.0 506.2 l6 3.5 M86.0 509.8 l6 -3.5"/></g><circle cx="89.0" cy="508.0" r="1.2" fill="#d2a81e"/>
<path d="M95.0 503.0 h8 l-4 5z" fill="#5c5c5c"/>
<rect x="70.5" y="528.5" width="19" height="19" fill="#eeeeee" stroke="#777" stroke-width="1"/>
<rect x="84.0" y="541.0" width="10" height="10" rx="2" fill="#ee4f5f" stroke="#d9384a" stroke-width="0.8"/><path d="M86.0 546.0 h6" stroke="#fff" stroke-width="2.2"/>
<rect x="66.0" y="564.0" width="2" height="2" fill="#adadad"/><rect x="65.0" y="563.0" width="2" height="2" fill="#fbfbfb"/><rect x="69.0" y="567.0" width="2" height="2" fill="#adadad"/><rect x="68.0" y="566.0" width="2" height="2" fill="#fbfbfb"/><rect x="72.0" y="564.0" width="2" height="2" fill="#adadad"/><rect x="71.0" y="563.0" width="2" height="2" fill="#fbfbfb"/><rect x="75.0" y="567.0" width="2" height="2" fill="#adadad"/><rect x="74.0" y="566.0" width="2" height="2" fill="#fbfbfb"/><rect x="78.0" y="564.0" width="2" height="2" fill="#adadad"/><rect x="77.0" y="563.0" width="2" height="2" fill="#fbfbfb"/><rect x="81.0" y="567.0" width="2" height="2" fill="#adadad"/><rect x="80.0" y="566.0" width="2" height="2" fill="#fbfbfb"/><rect x="84.0" y="564.0" width="2" height="2" fill="#adadad"/><rect x="83.0" y="563.0" width="2" height="2" fill="#fbfbfb"/><rect x="87.0" y="567.0" width="2" height="2" fill="#adadad"/><rect x="86.0" y="566.0" width="2" height="2" fill="#fbfbfb"/><rect x="90.0" y="564.0" width="2" height="2" fill="#adadad"/><rect x="89.0" y="563.0" width="2" height="2" fill="#fbfbfb"/><rect x="93.0" y="567.0" width="2" height="2" fill="#adadad"/><rect x="92.0" y="566.0" width="2" height="2" fill="#fbfbfb"/><rect x="96.0" y="564.0" width="2" height="2" fill="#adadad"/><rect x="95.0" y="563.0" width="2" height="2" fill="#fbfbfb"/><rect x="99.0" y="567.0" width="2" height="2" fill="#adadad"/><rect x="98.0" y="566.0" width="2" height="2" fill="#fbfbfb"/>
<circle cx="115" cy="141" r="7" fill="#353535"/><path d="M112.4 138.4 l5.2 5.2 M117.6 138.4 l-5.2 5.2" stroke="#fff" stroke-width="2" stroke-linecap="round"/>
<circle cx="135" cy="141" r="7" fill="#353535"/><rect x="131.8" y="140.3" width="4.6" height="3.6" rx="0.8" fill="none" stroke="#fff" stroke-width="1.2"/><path d="M133.6 139.8 V138.6 Q133.6 138 134.2 138 H137.6 Q138.2 138 138.2 138.6 V141.2 Q138.2 141.8 137.6 141.8 H137" fill="none" stroke="#fff" stroke-width="1.1"/>
<path d="M135.2 165.5 l3 4.4 L145.2 157.0" fill="none" stroke="#111" stroke-width="2.1" stroke-linecap="round" stroke-linejoin="round"/>
<path d="M135.2 185.5 l3 4.4 L145.2 177.0" fill="none" stroke="#111" stroke-width="2.1" stroke-linecap="round" stroke-linejoin="round"/>
<path d="M135.2 205.5 l3 4.4 L145.2 197.0" fill="none" stroke="#111" stroke-width="2.1" stroke-linecap="round" stroke-linejoin="round"/>
<path d="M135.2 225.5 l3 4.4 L145.2 217.0" fill="none" stroke="#111" stroke-width="2.1" stroke-linecap="round" stroke-linejoin="round"/>
<path d="M135.2 245.5 l3 4.4 L145.2 237.0" fill="none" stroke="#111" stroke-width="2.1" stroke-linecap="round" stroke-linejoin="round"/>
<path d="M135.2 265.5 l3 4.4 L145.2 257.0" fill="none" stroke="#111" stroke-width="2.1" stroke-linecap="round" stroke-linejoin="round"/>
<g fill="#fff" stroke="#888" stroke-width="0.7"><circle cx="163.5" cy="169.5" r="1"/><circle cx="165" cy="162" r="1"/><circle cx="172.5" cy="160.5" r="1"/></g>
<path d="M160.5 184.0 Q160.5 180.0 165 180.4 Q168 181.6 171 180.2 Q176 179.6 176 184.0 Q176.5 189.2 172 189.0 Q168 187.4 165 189.2 Q160 190.0 160.5 184.0 Z" fill="#e3e3e3" stroke="#8a8a8a" stroke-width="0.9"/>
<path d="M161.5 201.0 L166 211.0 L170.5 200.5 L175 199.5" fill="none" stroke="#777" stroke-width="0.9"/><g fill="#fff" stroke="#888" stroke-width="0.6"><circle cx="161.5" cy="201.0" r="0.9"/><circle cx="166" cy="211.0" r="0.9"/><circle cx="170.8" cy="200.5" r="0.8"/><circle cx="175" cy="199.5" r="0.9"/></g>
<path d="M160.5 224.0 Q160.5 220.0 165 220.4 Q168 221.6 171 220.2 Q176 219.6 176 224.0 Q176.5 229.2 172 229.0 Q168 227.4 165 229.2 Q160 230.0 160.5 224.0 Z" fill="#e3e3e3" stroke="#8a8a8a" stroke-width="0.9"/>
<path d="M161.5 241.0 L166 251.0 L170.5 240.5 L175 239.5" fill="none" stroke="#777" stroke-width="0.9"/><g fill="#fff" stroke="#888" stroke-width="0.6"><circle cx="161.5" cy="241.0" r="0.9"/><circle cx="166" cy="251.0" r="0.9"/><circle cx="170.8" cy="240.5" r="0.8"/><circle cx="175" cy="239.5" r="0.9"/></g>
<path d="M160.5 264.0 Q160.5 260.0 165 260.4 Q168 261.6 171 260.2 Q176 259.6 176 264.0 Q176.5 269.2 172 269.0 Q168 267.4 165 269.2 Q160 270.0 160.5 264.0 Z" fill="#dfe8f5" stroke="#b9cbe6" stroke-width="0.9"/>
<g transform="translate(1175,1184)"><circle cx="8" cy="9" r="4.5" fill="none" stroke="#222" stroke-width="1.6" stroke-dasharray="2.4 1.2"/><circle cx="8" cy="9" r="1.8" fill="#222"/><path d="M4 2 l8 12 M3.5 4.5 l3 0" stroke="#222" stroke-width="1.1"/></g>
<g transform="translate(1736,1184)"><circle cx="6" cy="5.5" r="3.6" fill="none" stroke="#d9222e" stroke-width="1.4"/><path d="M3.6 3 l4.8 5" stroke="#d9222e" stroke-width="1.4"/><path d="M3 16.5 Q11 13 15.5 2.5 Q16.5 10 9 16 Z" fill="#8c8c8c" stroke="#666" stroke-width="0.6"/></g>
<path d="M1763.5 1191 l3 4.6 L1774.5 1183.5" fill="none" stroke="#111" stroke-width="2.1" stroke-linecap="round" stroke-linejoin="round"/>
<g transform="translate(1906,1184)" opacity="0.7"><circle cx="9" cy="9" r="6.5" fill="#bdbdbd" stroke="#666" stroke-width="1.2"/><ellipse cx="9" cy="9" rx="3" ry="6.5" fill="none" stroke="#666" stroke-width="0.9"/><path d="M2.5 9 H15.5 M9 2.5 V15.5" stroke="#666" stroke-width="0.9"/></g>
<g transform="translate(1932,1184)"><path d="M9 3 L15.5 15 H2.5 Z" fill="#f6ef9e" stroke="#222" stroke-width="1.1" stroke-linejoin="round"/><path d="M9 7.2 V11.2" stroke="#222" stroke-width="1.4"/><circle cx="9" cy="13.2" r="0.8" fill="#222"/></g>
<path d="M1964 1207 l11 -11 M1968 1207 l7 -7 M1972 1207 l3 -3" stroke="#9a9a9a" stroke-width="1"/></svg>
</body></html>
